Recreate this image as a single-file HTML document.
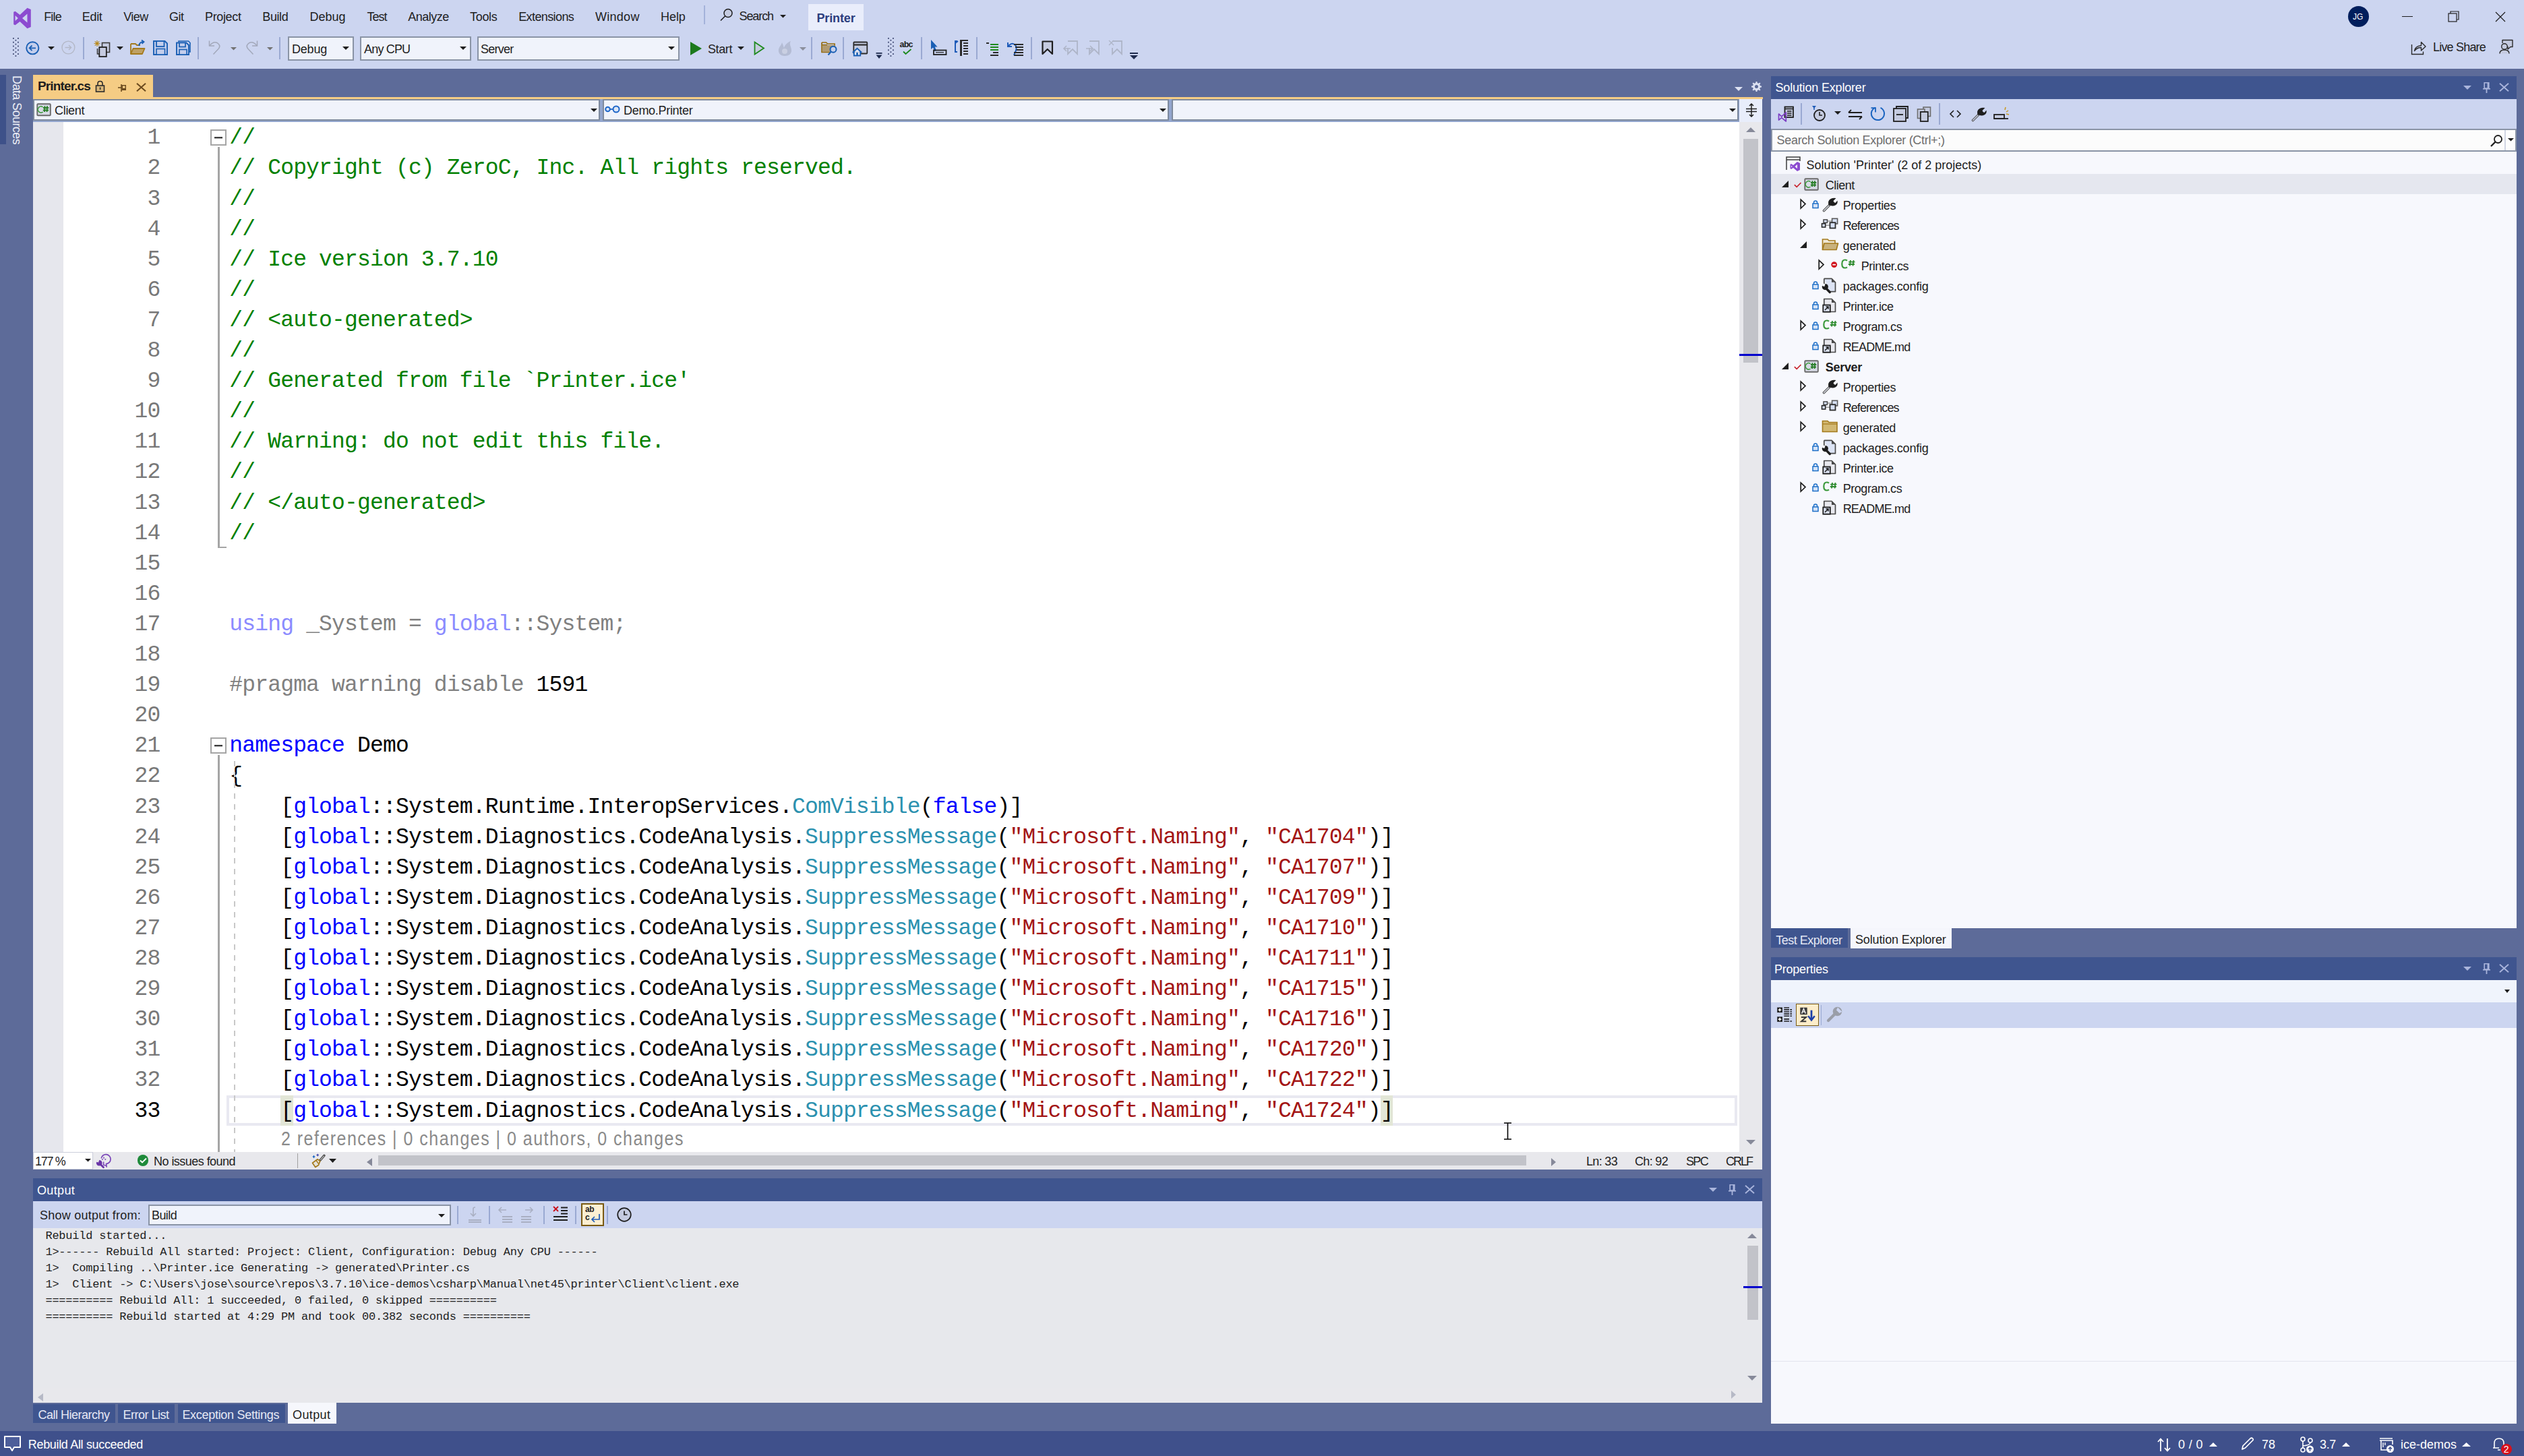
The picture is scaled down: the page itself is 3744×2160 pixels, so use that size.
<!DOCTYPE html>
<html><head><meta charset="utf-8"><title>Printer - Visual Studio</title>
<style>
html,body{margin:0;padding:0;}
body{width:3744px;height:2160px;position:relative;overflow:hidden;background:#CCD5F0;font-family:'Liberation Sans', sans-serif;}
.a{position:absolute;}
.t{position:absolute;white-space:pre;}
svg.a{overflow:visible;}
</style></head><body>
<div class="a" style="left:0px;top:0px;width:3744px;height:102px;background:#CCD5F0;"></div>
<svg class="a" style="left:17px;top:11px" width="32" height="32" viewBox="0 0 24 24"><path d="M17.6 0.5 L9.4 8.25 L4.2 4.3 L2.4 5.1 V18.9 L4.2 19.7 L9.4 15.75 L17.6 23.5 L21.6 21.8 V2.2 Z M4.2 15 V9 L7.4 12 Z M17.6 16.8 L12 12 L17.6 7.2 Z" fill="#8C4BD0" fill-rule="evenodd"/></svg>
<div class="t" style="left:65.20px;top:15.41px;font:18px 'Liberation Sans', sans-serif;line-height:20.11px;color:#1E1E1E;letter-spacing:-0.829px;">File</div>
<div class="t" style="left:121.80px;top:15.41px;font:18px 'Liberation Sans', sans-serif;line-height:20.11px;color:#1E1E1E;letter-spacing:-0.333px;">Edit</div>
<div class="t" style="left:183.20px;top:15.41px;font:18px 'Liberation Sans', sans-serif;line-height:20.11px;color:#1E1E1E;letter-spacing:-0.551px;">View</div>
<div class="t" style="left:251.00px;top:15.41px;font:18px 'Liberation Sans', sans-serif;line-height:20.11px;color:#1E1E1E;letter-spacing:-0.539px;">Git</div>
<div class="t" style="left:304.00px;top:15.41px;font:18px 'Liberation Sans', sans-serif;line-height:20.11px;color:#1E1E1E;letter-spacing:-0.347px;">Project</div>
<div class="t" style="left:389.30px;top:15.41px;font:18px 'Liberation Sans', sans-serif;line-height:20.11px;color:#1E1E1E;letter-spacing:-0.406px;">Build</div>
<div class="t" style="left:459.40px;top:15.41px;font:18px 'Liberation Sans', sans-serif;line-height:20.11px;color:#1E1E1E;letter-spacing:0.011px;">Debug</div>
<div class="t" style="left:544.60px;top:15.41px;font:18px 'Liberation Sans', sans-serif;line-height:20.11px;color:#1E1E1E;letter-spacing:-1.029px;">Test</div>
<div class="t" style="left:605.20px;top:15.41px;font:18px 'Liberation Sans', sans-serif;line-height:20.11px;color:#1E1E1E;letter-spacing:-0.492px;">Analyze</div>
<div class="t" style="left:697.00px;top:15.41px;font:18px 'Liberation Sans', sans-serif;line-height:20.11px;color:#1E1E1E;letter-spacing:-0.306px;">Tools</div>
<div class="t" style="left:769.20px;top:15.41px;font:18px 'Liberation Sans', sans-serif;line-height:20.11px;color:#1E1E1E;letter-spacing:-0.606px;">Extensions</div>
<div class="t" style="left:883.00px;top:15.41px;font:18px 'Liberation Sans', sans-serif;line-height:20.11px;color:#1E1E1E;letter-spacing:0.278px;">Window</div>
<div class="t" style="left:980.00px;top:15.41px;font:18px 'Liberation Sans', sans-serif;line-height:20.11px;color:#1E1E1E;letter-spacing:-0.058px;">Help</div>
<div class="a" style="left:1044px;top:8px;width:2px;height:28px;background:#A4B2DA;"></div>
<svg class="a" style="left:1067px;top:12px;" width="22" height="20" viewBox="0 0 22 20"><circle cx="13" cy="7.5" r="6" fill="#C5CBE0" stroke="#1E1E1E" stroke-width="1.5"/><path d="M9 11.5 L2 18.5" stroke="#1E1E1E" stroke-width="1.6"/></svg>
<div class="t" style="left:1096.50px;top:13.71px;font:18px 'Liberation Sans', sans-serif;line-height:20.11px;color:#1E1E1E;letter-spacing:-1.091px;">Search</div>
<svg class="a" style="left:1157px;top:21.5px;" width="9" height="5" viewBox="0 0 9 5"><path d="M0 0 H9 L4.5 4.5 Z" fill="#1E1E1E"/></svg>
<div class="a" style="left:1199px;top:6px;width:82px;height:39px;background:#E9EDFB;"></div>
<div class="t" style="left:1211.50px;top:16.71px;font:bold 18px 'Liberation Sans', sans-serif;line-height:20.11px;color:#2D3E7E;letter-spacing:-0.147px;">Printer</div>
<div class="a" style="left:3483px;top:9px;width:31px;height:31px;border-radius:50%;background:#001E5C"></div>
<div class="t" style="left:3490.00px;top:18.64px;font:12px 'Liberation Sans', sans-serif;line-height:13.41px;color:#FFFFFF;letter-spacing:0px;">JG</div>
<div class="a" style="left:3563px;top:23.5px;width:16px;height:1.2px;background:#1E1E1E;"></div>
<svg class="a" style="left:3631px;top:16px;" width="18" height="17" viewBox="0 0 18 17"><rect x="1" y="4" width="12" height="12" fill="none" stroke="#1E1E1E" stroke-width="1.2"/><path d="M4 4 V1 H16 V13 H13" fill="none" stroke="#1E1E1E" stroke-width="1.2"/></svg>
<svg class="a" style="left:3701px;top:17px;" width="16" height="16" viewBox="0 0 16 16"><path d="M1 1 L15 15 M15 1 L1 15" stroke="#1E1E1E" stroke-width="1.2"/></svg>
<svg class="a" style="left:19px;top:56px;" width="9" height="29" viewBox="0 0 9 29"><rect x="0" y="0.0" width="1.8" height="1.8" fill="#3C4670"/><rect x="7" y="0.0" width="1.8" height="1.8" fill="#3C4670"/><rect x="3.5" y="2.9" width="1.8" height="1.8" fill="#3C4670"/><rect x="0" y="5.8" width="1.8" height="1.8" fill="#3C4670"/><rect x="7" y="5.8" width="1.8" height="1.8" fill="#3C4670"/><rect x="3.5" y="8.7" width="1.8" height="1.8" fill="#3C4670"/><rect x="0" y="11.6" width="1.8" height="1.8" fill="#3C4670"/><rect x="7" y="11.6" width="1.8" height="1.8" fill="#3C4670"/><rect x="3.5" y="14.5" width="1.8" height="1.8" fill="#3C4670"/><rect x="0" y="17.4" width="1.8" height="1.8" fill="#3C4670"/><rect x="7" y="17.4" width="1.8" height="1.8" fill="#3C4670"/><rect x="3.5" y="20.3" width="1.8" height="1.8" fill="#3C4670"/><rect x="0" y="23.2" width="1.8" height="1.8" fill="#3C4670"/><rect x="7" y="23.2" width="1.8" height="1.8" fill="#3C4670"/><rect x="3.5" y="26.1" width="1.8" height="1.8" fill="#3C4670"/></svg>
<svg class="a" style="left:38px;top:61px;" width="21" height="21" viewBox="0 0 21 21"><circle cx="10.3" cy="10.3" r="9.1" fill="#C3CEEC" stroke="#1A5FB4" stroke-width="1.9"/><path d="M15 10.3 H6 M9.5 6.5 L5.7 10.3 L9.5 14.1" fill="none" stroke="#1A5FB4" stroke-width="1.8"/></svg>
<svg class="a" style="left:71px;top:69px;" width="10" height="6" viewBox="0 0 10 6"><path d="M0 0 H10 L5 5 Z" fill="#1E1E1E"/></svg>
<svg class="a" style="left:91px;top:60px;" width="21" height="21" viewBox="0 0 21 21"><circle cx="10.4" cy="10.5" r="9.4" fill="none" stroke="#B3B8C7" stroke-width="1.4"/><path d="M5.5 10.5 H14.5 M11 7 L14.6 10.5 L11 14" fill="none" stroke="#B3B8C7" stroke-width="1.4"/></svg>
<div class="a" style="left:123px;top:55px;width:2px;height:33px;background:#9AA9D2;"></div>
<svg class="a" style="left:141px;top:59px;" width="24" height="27" viewBox="0 0 24 27"><g fill="none" stroke="#B8891A" stroke-width="1.2"><path d="M3 1 V10 M-1.5 5.5 H7.5 M-0.2 2.3 L6.2 8.7 M6.2 2.3 L-0.2 8.7"/></g><rect x="10.5" y="4.5" width="11" height="14" fill="#C5CBE0" stroke="#3A3A3A" stroke-width="1.6"/><path d="M3.5 13 V21 H6" fill="none" stroke="#3A3A3A" stroke-width="1.6"/><rect x="6.3" y="11" width="10.5" height="14" fill="#C5CBE0" stroke="#1E1E1E" stroke-width="1.8"/></svg>
<svg class="a" style="left:173px;top:69px;" width="10" height="6" viewBox="0 0 10 6"><path d="M0 0 H10 L5 5 Z" fill="#1E1E1E"/></svg>
<svg class="a" style="left:193px;top:59px;" width="23" height="23" viewBox="0 0 23 23"><path d="M1 6 H8 L10 8 H15 M1 6 V21" fill="#C9B27E" stroke="#A47A1C" stroke-width="1.8"/><path d="M1 21 L4.5 13 H21.5 L18 21 Z" fill="#BFA163" stroke="#A47A1C" stroke-width="1.8" stroke-linejoin="round"/><path d="M13 9 Q14 3 20 3 M17 0.5 L20.5 3 L17.5 5.8" fill="none" stroke="#1A5FB4" stroke-width="1.8"/></svg>
<svg class="a" style="left:227px;top:60px;" width="22" height="22" viewBox="0 0 22 22"><path d="M1 1 H17.5 L21 4.5 V21 H1 Z" fill="#C3CEEC" stroke="#1A5FB4" stroke-width="1.9"/><rect x="5" y="1" width="11.5" height="8" fill="#C3CEEC" stroke="#1A5FB4" stroke-width="1.8"/><rect x="5" y="12.5" width="12.5" height="8.5" fill="#C3CEEC" stroke="#1A5FB4" stroke-width="1.6"/></svg>
<svg class="a" style="left:261px;top:60px;" width="22" height="22" viewBox="0 0 22 22"><path d="M4 2.5 V1 H18.5 L21 3.5 V17 H19" fill="none" stroke="#1A5FB4" stroke-width="1.6"/><path d="M1 3.5 H15.5 L19 7 V21 H1 Z" fill="#C3CEEC" stroke="#1A5FB4" stroke-width="1.9"/><rect x="5" y="3.5" width="9" height="6" fill="#C3CEEC" stroke="#1A5FB4" stroke-width="1.7"/><rect x="5" y="13.5" width="11" height="7.5" fill="#C3CEEC" stroke="#1A5FB4" stroke-width="1.6"/></svg>
<div class="a" style="left:293px;top:55px;width:2px;height:33px;background:#9AA9D2;"></div>
<svg class="a" style="left:309px;top:59px;" width="20" height="23" viewBox="0 0 20 23"><path d="M1.5 1.5 V9 H9" fill="none" stroke="#A2A8BA" stroke-width="1.5"/><path d="M1.8 8.8 Q5 5 8 4 Q12 3 15 6 Q18.5 9.5 15 13.5 L7.5 21.5" fill="none" stroke="#A2A8BA" stroke-width="1.5"/></svg>
<svg class="a" style="left:342px;top:70px;" width="9" height="5" viewBox="0 0 9 5"><path d="M0 0 H9 L4.5 4.5 Z" fill="#737373"/></svg>
<svg class="a" style="left:363px;top:59px;" width="20" height="23" viewBox="0 0 20 23"><path d="M18.5 1.5 V9 H11" fill="none" stroke="#A2A8BA" stroke-width="1.5"/><path d="M18.2 8.8 Q15 5 12 4 Q8 3 5 6 Q1.5 9.5 5 13.5 L12.5 21.5" fill="none" stroke="#A2A8BA" stroke-width="1.5"/></svg>
<svg class="a" style="left:396px;top:70px;" width="9" height="5" viewBox="0 0 9 5"><path d="M0 0 H9 L4.5 4.5 Z" fill="#737373"/></svg>
<div class="a" style="left:414px;top:55px;width:2px;height:33px;background:#9AA9D2;"></div>
<div class="a" style="left:427px;top:54px;width:98px;height:36px;background:#F0F3FB;box-sizing:border-box;border:2px solid #8A94A6;"></div>
<div class="t" style="left:433.00px;top:62.71px;font:18px 'Liberation Sans', sans-serif;line-height:20.11px;color:#1E1E1E;letter-spacing:-0.209px;">Debug</div>
<svg class="a" style="left:508px;top:69px;" width="10" height="6" viewBox="0 0 10 6"><path d="M0 0 H10 L5 5 Z" fill="#1E1E1E"/></svg>
<div class="a" style="left:534px;top:54px;width:165px;height:36px;background:#F0F3FB;box-sizing:border-box;border:2px solid #8A94A6;"></div>
<div class="t" style="left:540.00px;top:62.71px;font:18px 'Liberation Sans', sans-serif;line-height:20.11px;color:#1E1E1E;letter-spacing:-0.819px;">Any CPU</div>
<svg class="a" style="left:682px;top:69px;" width="10" height="6" viewBox="0 0 10 6"><path d="M0 0 H10 L5 5 Z" fill="#1E1E1E"/></svg>
<div class="a" style="left:708px;top:54px;width:300px;height:36px;background:#F0F3FB;box-sizing:border-box;border:2px solid #8A94A6;"></div>
<div class="t" style="left:713.00px;top:62.71px;font:18px 'Liberation Sans', sans-serif;line-height:20.11px;color:#1E1E1E;letter-spacing:-0.753px;">Server</div>
<svg class="a" style="left:991px;top:69px;" width="10" height="6" viewBox="0 0 10 6"><path d="M0 0 H10 L5 5 Z" fill="#1E1E1E"/></svg>
<svg class="a" style="left:1023px;top:61px;" width="19" height="22" viewBox="0 0 19 22"><path d="M1 1 L18 11 L1 21 Z" fill="#1C7A1C"/></svg>
<div class="t" style="left:1050.00px;top:62.71px;font:18px 'Liberation Sans', sans-serif;line-height:20.11px;color:#1E1E1E;letter-spacing:-0.4px;">Start</div>
<svg class="a" style="left:1094px;top:69px;" width="10" height="6" viewBox="0 0 10 6"><path d="M0 0 H10 L5 5 Z" fill="#1E1E1E"/></svg>
<svg class="a" style="left:1118px;top:61px;" width="17" height="21" viewBox="0 0 17 21"><path d="M1.5 1.5 L15 10.5 L1.5 19.5 Z" fill="#C5CBE0" stroke="#1C8A1C" stroke-width="1.8"/></svg>
<svg class="a" style="left:1153px;top:59px;" width="22" height="25" viewBox="0 0 22 25"><path d="M11 24 C4 24 1 19 2 14 C3 10 6 8 7 4 C9 8 9 10 10 12 C11 8 15 4 20 2 C17 7 21 10 21 16 C21 21 17 24 11 24 Z" fill="#B4BCD4"/><circle cx="11" cy="17" r="4" fill="#C9CFE2"/></svg>
<svg class="a" style="left:1186px;top:70px;" width="10" height="6" viewBox="0 0 10 6"><path d="M0 0 H10 L5 5 Z" fill="#8B8F9C"/></svg>
<div class="a" style="left:1203px;top:55px;width:2px;height:33px;background:#9AA9D2;"></div>
<svg class="a" style="left:1217px;top:60px;" width="26" height="25" viewBox="0 0 26 25"><path d="M2 3 H8.5 L10.5 5 H21 V10" fill="none" stroke="#946B0E" stroke-width="1.7"/><path d="M2 3 V17.5 H14" fill="none" stroke="#946B0E" stroke-width="1.7"/><path d="M2.8 6.8 H21 V11 L14 17 H2.8 Z" fill="#B09A72"/><path d="M2 6.5 H10" stroke="#946B0E" stroke-width="1.4"/><circle cx="19" cy="13.2" r="4.5" fill="#C5D0EC" stroke="#1A5FB4" stroke-width="2"/><path d="M15.8 16.5 L11.5 21.5" stroke="#1A5FB4" stroke-width="2.1"/></svg>
<div class="a" style="left:1250px;top:55px;width:2px;height:33px;background:#9AA9D2;"></div>
<svg class="a" style="left:1264px;top:61px;" width="26" height="24" viewBox="0 0 26 24"><rect x="2.3" y="1.5" width="20" height="17" rx="1" fill="#C5CBE0" stroke="#2B2B2B" stroke-width="1.8"/><path d="M2.3 5.5 H22.3" stroke="#2B2B2B" stroke-width="2.2"/><path d="M0.8 17 L7.5 10.8 L14.2 17 M2.8 15.5 V21.5 H12.2 V15.5" fill="#E6ECF8" stroke="#1A5FB4" stroke-width="1.9"/><rect x="6.2" y="17" width="2.6" height="4" fill="#1A5FB4"/></svg>
<svg class="a" style="left:1299px;top:77px;" width="10" height="11" viewBox="0 0 10 11"><rect x="0.5" y="1" width="9" height="1.8" fill="#1E2B4E"/><path d="M0.5 4.5 H9.5 L5 10 Z" fill="#1E2B4E"/></svg>
<svg class="a" style="left:1317px;top:56px;" width="9" height="29" viewBox="0 0 9 29"><rect x="0" y="0.0" width="1.8" height="1.8" fill="#3C4670"/><rect x="7" y="0.0" width="1.8" height="1.8" fill="#3C4670"/><rect x="3.5" y="2.9" width="1.8" height="1.8" fill="#3C4670"/><rect x="0" y="5.8" width="1.8" height="1.8" fill="#3C4670"/><rect x="7" y="5.8" width="1.8" height="1.8" fill="#3C4670"/><rect x="3.5" y="8.7" width="1.8" height="1.8" fill="#3C4670"/><rect x="0" y="11.6" width="1.8" height="1.8" fill="#3C4670"/><rect x="7" y="11.6" width="1.8" height="1.8" fill="#3C4670"/><rect x="3.5" y="14.5" width="1.8" height="1.8" fill="#3C4670"/><rect x="0" y="17.4" width="1.8" height="1.8" fill="#3C4670"/><rect x="7" y="17.4" width="1.8" height="1.8" fill="#3C4670"/><rect x="3.5" y="20.3" width="1.8" height="1.8" fill="#3C4670"/><rect x="0" y="23.2" width="1.8" height="1.8" fill="#3C4670"/><rect x="7" y="23.2" width="1.8" height="1.8" fill="#3C4670"/><rect x="3.5" y="26.1" width="1.8" height="1.8" fill="#3C4670"/></svg>
<div class="t" style="left:1334.50px;top:59.68px;font:bold 12.5px 'Liberation Sans', sans-serif;line-height:13.96px;color:#1E1E1E;letter-spacing:-0.782px;">abc</div>
<svg class="a" style="left:1339px;top:72px;" width="14" height="10" viewBox="0 0 14 10"><path d="M1 4.5 L4.5 8 L12.5 1" fill="none" stroke="#1C8A1C" stroke-width="1.8"/></svg>
<div class="a" style="left:1366px;top:55px;width:2px;height:33px;background:#9AA9D2;"></div>
<svg class="a" style="left:1380px;top:59px;" width="25" height="26" viewBox="0 0 25 26"><path d="M1 0 L1 14 L4 11.5 L6.5 17 L9 16 L6.8 10.5 L10.5 10.5 Z" fill="#1A5FB4"/><rect x="5" y="15.5" width="18.5" height="6.5" fill="none" stroke="#1E1E1E" stroke-width="1.8"/><path d="M8 18.7 H20" stroke="#1E1E1E" stroke-width="1.2"/></svg>
<svg class="a" style="left:1414px;top:59px;" width="24" height="26" viewBox="0 0 24 26"><path d="M6 2 H3 V18 H6" fill="none" stroke="#1E5BB8" stroke-width="2"/><path d="M3 5 L7 2" stroke="#1E5BB8" stroke-width="2"/><rect x="10" y="0" width="3" height="24" fill="#2B2B2B"/><path d="M13 1 H22 M15 5 H22 M15 9 H22 M15 13 H22 M15 17 H22 M15 21 H22" stroke="#2B2B2B" stroke-width="2"/></svg>
<div class="a" style="left:1448px;top:55px;width:2px;height:33px;background:#9AA9D2;"></div>
<svg class="a" style="left:1463px;top:62px;" width="21" height="21" viewBox="0 0 21 21"><path d="M0 2 H4 M6 4 H18 M6 8 H18 M6 12 H18 M10 16 H18 M6 20 H18" stroke="#2B2B2B" stroke-width="2"/><path d="M6 4 H18 M6 8 H18 M6 12 H18" stroke="#1C8A1C" stroke-width="2"/></svg>
<svg class="a" style="left:1494px;top:60px;" width="25" height="24" viewBox="0 0 25 24"><path d="M10 22 L13 15 Q15 9 11 6 Q7 3 3 7 L1 9 M1 3 V9 H7" fill="none" stroke="#1E5BB8" stroke-width="2"/><path d="M10 6 H24 M12 10 H24 M14 14 H24 M10 18 H24 M10 22 H24" stroke="#2B2B2B" stroke-width="2"/></svg>
<div class="a" style="left:1529px;top:55px;width:2px;height:33px;background:#9AA9D2;"></div>
<svg class="a" style="left:1545px;top:60px;" width="18" height="22" viewBox="0 0 18 22"><path d="M1.5 1.5 H16 V20 L8.75 13 L1.5 20 Z" fill="#C5CBE0" stroke="#1E1E1E" stroke-width="2.2" stroke-linejoin="round"/></svg>
<svg class="a" style="left:1578px;top:59px;" width="22" height="23" viewBox="0 0 22 23"><path d="M6 2 H20 V21 L13 14 L6 21 V12" fill="none" stroke="#AEB5C8" stroke-width="1.8"/></svg>
<svg class="a" style="left:1610px;top:59px;" width="22" height="23" viewBox="0 0 22 23"><path d="M6 2 H20 V21 L13 14 L6 21 V12" fill="none" stroke="#AEB5C8" stroke-width="1.8"/></svg>
<svg class="a" style="left:1644px;top:59px;" width="22" height="23" viewBox="0 0 22 23"><path d="M6 2 H20 V21 L13 14 L6 21 V12" fill="none" stroke="#AEB5C8" stroke-width="1.8"/></svg>
<svg class="a" style="left:1577px;top:67px;" width="12" height="10" viewBox="0 0 12 10"><path d="M11 5 H1 M5 1 L1 5 L5 9" fill="none" stroke="#AEB5C8" stroke-width="1.6"/></svg>
<svg class="a" style="left:1610px;top:67px;" width="12" height="10" viewBox="0 0 12 10"><path d="M1 5 H11 M7 1 L11 5 L7 9" fill="none" stroke="#AEB5C8" stroke-width="1.6"/></svg>
<svg class="a" style="left:1644px;top:59px;" width="9" height="9" viewBox="0 0 9 9"><path d="M1 1 L8 8 M8 1 L1 8" stroke="#AEB5C8" stroke-width="1.4"/></svg>
<svg class="a" style="left:1676px;top:78px;" width="12" height="11" viewBox="0 0 12 11"><rect x="0" y="0" width="12" height="2" fill="#1E2B4E"/><path d="M0 4 H12 L6 10 Z" fill="#1E2B4E"/></svg>
<svg class="a" style="left:3576px;top:60px;" width="24" height="22" viewBox="0 0 24 22"><path d="M1.5 6 V20.5 H18.5 V16.5" fill="none" stroke="#2B2B2B" stroke-width="1.4"/><path d="M5.5 15.5 Q6.5 8.5 15.5 7.5 V2.5 L22 9 L15.5 15 V10.5 Q9 10.5 5.5 15.5 Z" fill="none" stroke="#2B2B2B" stroke-width="1.4" stroke-linejoin="round"/></svg>
<div class="t" style="left:3609.00px;top:59.71px;font:18px 'Liberation Sans', sans-serif;line-height:20.11px;color:#1E1E1E;letter-spacing:-0.806px;">Live Share</div>
<svg class="a" style="left:3707px;top:58px;" width="22" height="23" viewBox="0 0 22 23"><path d="M5 6 V1.5 H20 V11.5 H17 L13 15 V11.5 H12" fill="#C5CBE0" stroke="#2B2B2B" stroke-width="1.4" stroke-linejoin="round"/><circle cx="8" cy="11" r="4.3" fill="#C5CBE0" stroke="#2B2B2B" stroke-width="1.4"/><path d="M1 21.5 Q1 16 8 16 Q15 16 15 21.5" fill="#C5CBE0" stroke="#2B2B2B" stroke-width="1.4"/></svg>
<div class="a" style="left:0px;top:102px;width:3744px;height:2021px;background:#5D6B99;"></div>
<div class="a" style="left:0px;top:111px;width:9px;height:103px;background:#3E5189;"></div>
<div class="t" style="left:35px;top:111.5px;font:18px 'Liberation Sans', sans-serif;color:#EDEFF7;transform-origin:0 0;transform:rotate(90deg);letter-spacing:-0.58px;line-height:20px">Data Sources</div>
<div class="a" style="left:49px;top:111px;width:178px;height:36px;background:#F5CC84;"></div>
<div class="a" style="left:49px;top:144px;width:2566px;height:3px;background:#F5CC84;"></div>
<div class="t" style="left:56.00px;top:117.30px;font:bold 19px 'Liberation Sans', sans-serif;line-height:21.23px;color:#1E1E1E;letter-spacing:-0.861px;">Printer.cs</div>
<svg class="a" style="left:141px;top:119px;" width="15" height="18" viewBox="0 0 15 18"><path d="M4 8 V5 Q4 1.5 7.5 1.5 Q11 1.5 11 5 V8" fill="none" stroke="#2B2B2B" stroke-width="1.6"/><rect x="1.5" y="8" width="12" height="9" fill="#D9B779" stroke="#2B2B2B" stroke-width="1.6"/><rect x="6.8" y="10.5" width="1.6" height="3.5" fill="#2B2B2B"/></svg>
<svg class="a" style="left:175px;top:124px;" width="13" height="13" viewBox="0 0 13 13"><path d="M0 6 H5" stroke="#6B4A1E" stroke-width="1.6"/><rect x="5.5" y="2" width="6.5" height="8" fill="#6B4A1E"/><rect x="7" y="3.5" width="3.6" height="3.3" fill="#F5CC84"/><path d="M5 1 V12" stroke="#6B4A1E" stroke-width="1.6"/></svg>
<svg class="a" style="left:202px;top:123px;" width="15" height="13" viewBox="0 0 15 13"><path d="M1 0.8 L14 12.2 M14 0.8 L1 12.2" stroke="#6B4A1E" stroke-width="2.1"/></svg>
<div class="a" style="left:49px;top:147px;width:2531px;height:34px;background:#93A6CE;"></div>
<div class="a" style="left:49px;top:147px;width:841px;height:32px;background:#F0F3FB;box-sizing:border-box;border:2px solid #7F8B9E;"></div>
<svg class="a" style="left:876px;top:161px;" width="10" height="5" viewBox="0 0 10 5"><path d="M0 0 H10 L5 5 Z" fill="#1E1E1E"/></svg>
<div class="a" style="left:894px;top:147px;width:840px;height:32px;background:#F0F3FB;box-sizing:border-box;border:2px solid #7F8B9E;"></div>
<svg class="a" style="left:1720px;top:161px;" width="10" height="5" viewBox="0 0 10 5"><path d="M0 0 H10 L5 5 Z" fill="#1E1E1E"/></svg>
<div class="a" style="left:1738px;top:147px;width:841px;height:32px;background:#F0F3FB;box-sizing:border-box;border:2px solid #7F8B9E;"></div>
<svg class="a" style="left:2565px;top:161px;" width="10" height="5" viewBox="0 0 10 5"><path d="M0 0 H10 L5 5 Z" fill="#1E1E1E"/></svg>
<svg class="a" style="left:54px;top:153px;" width="22" height="20" viewBox="0 0 22 20"><rect x="1.3" y="1.3" width="19.5" height="17" rx="1" fill="#D8DAE6" stroke="#6A6A6A" stroke-width="1.9"/><path d="M9.6 5.8 A4.6 4.6 0 1 0 9.6 13.2" fill="none" stroke="#3C9A3C" stroke-width="1.5"/><path d="M12.5 4.3 L12 13 M16 4.3 L15.5 13 M10 7 H18.3 M9.8 10.5 H18" stroke="#2A7F2A" stroke-width="1.9"/></svg>
<div class="t" style="left:81.00px;top:153.51px;font:18px 'Liberation Sans', sans-serif;line-height:20.11px;color:#1E1E1E;letter-spacing:-0.3px;">Client</div>
<svg class="a" style="left:897px;top:156px;" width="25" height="12" viewBox="0 0 25 12"><circle cx="4.5" cy="6" r="3.3" fill="#DCE6F6" stroke="#1E66C8" stroke-width="2"/><path d="M8 6 H12" stroke="#1E66C8" stroke-width="1.8"/><circle cx="17" cy="6" r="4.5" fill="#DCE6F6" stroke="#1E66C8" stroke-width="2"/></svg>
<div class="t" style="left:925.00px;top:153.51px;font:18px 'Liberation Sans', sans-serif;line-height:20.11px;color:#1E1E1E;letter-spacing:-0.3px;">Demo.Printer</div>
<div class="a" style="left:2580px;top:147px;width:34px;height:34px;background:#E8EDFB;"></div>
<svg class="a" style="left:2590px;top:153px;" width="16" height="21" viewBox="0 0 16 21"><path d="M8 1 V20 M5 4 L8 1 L11 4 M5 17 L8 20 L11 17" fill="none" stroke="#1E1E1E" stroke-width="1.5"/><path d="M0 8.5 H16 M0 12.5 H16" stroke="#1E1E1E" stroke-width="1.6"/></svg>
<svg class="a" style="left:2573px;top:129px;" width="12" height="7" viewBox="0 0 12 7"><path d="M0 0 H12 L6 6 Z" fill="#DDE2F2"/></svg>
<svg class="a" style="left:2598px;top:121px;" width="15" height="15" viewBox="0 0 15 15"><path d="M12.97 6.30 L15.04 6.52 L15.04 8.48 L12.97 8.70 L12.22 10.52 L13.52 12.13 L12.13 13.52 L10.52 12.22 L8.70 12.97 L8.48 15.04 L6.52 15.04 L6.30 12.97 L4.48 12.22 L2.87 13.52 L1.48 12.13 L2.78 10.52 L2.03 8.70 L-0.04 8.48 L-0.04 6.52 L2.03 6.30 L2.78 4.48 L1.48 2.87 L2.87 1.48 L4.48 2.78 L6.30 2.03 L6.52 -0.04 L8.48 -0.04 L8.70 2.03 L10.52 2.78 L12.13 1.48 L13.52 2.87 L12.22 4.48 Z M7.5 5 A2.5 2.5 0 1 0 7.5 10 A2.5 2.5 0 1 0 7.5 5 Z" fill="#DDE2F2" fill-rule="evenodd"/></svg>
<div class="a" style="left:49px;top:181px;width:2531px;height:1528px;background:#FFFFFF;"></div>
<div class="a" style="left:49px;top:181px;width:45px;height:1528px;background:#E6E7ED;"></div>
<div class="a" style="left:2580px;top:181px;width:34px;height:1528px;background:#E8E8EC;"></div>
<svg class="a" style="left:2590px;top:189px;" width="14" height="8" viewBox="0 0 14 8"><path d="M0 7 L7 0 L14 7 Z" fill="#868999"/></svg>
<div class="a" style="left:2586px;top:206px;width:22px;height:332px;background:#C2C3C9;"></div>
<div class="a" style="left:2580px;top:525px;width:34px;height:3px;background:#0000CD;"></div>
<svg class="a" style="left:2590px;top:1691px;" width="14" height="8" viewBox="0 0 14 8"><path d="M0 0 H14 L7 7 Z" fill="#868999"/></svg>
<div class="a" style="left:336px;top:1625px;width:2241px;height:45px;box-sizing:border-box;border:4.4px solid #E9E9F1;"></div>
<div class="a" style="left:416.3px;top:1625px;width:18.6px;height:45px;background:#E2E6D6;"></div>
<div class="a" style="left:2047.6px;top:1625px;width:18.6px;height:45px;background:#E2E6D6;"></div>
<div class="t" style="left:218.53px;top:186.33px;font:33px 'Liberation Mono', monospace;line-height:37.38px;color:#787878;letter-spacing:-0.8332226562500011px;">1</div>
<div class="t" style="left:340.30px;top:186.33px;font:33px 'Liberation Mono', monospace;line-height:37.38px;color:#000;letter-spacing:-0.8332226562500011px;"><span style="color:#008000">//</span></div>
<div class="t" style="left:218.53px;top:231.43px;font:33px 'Liberation Mono', monospace;line-height:37.38px;color:#787878;letter-spacing:-0.8332226562500011px;">2</div>
<div class="t" style="left:340.30px;top:231.43px;font:33px 'Liberation Mono', monospace;line-height:37.38px;color:#000;letter-spacing:-0.8332226562500011px;"><span style="color:#008000">// Copyright (c) ZeroC, Inc. All rights reserved.</span></div>
<div class="t" style="left:218.53px;top:276.53px;font:33px 'Liberation Mono', monospace;line-height:37.38px;color:#787878;letter-spacing:-0.8332226562500011px;">3</div>
<div class="t" style="left:340.30px;top:276.53px;font:33px 'Liberation Mono', monospace;line-height:37.38px;color:#000;letter-spacing:-0.8332226562500011px;"><span style="color:#008000">//</span></div>
<div class="t" style="left:218.53px;top:321.63px;font:33px 'Liberation Mono', monospace;line-height:37.38px;color:#787878;letter-spacing:-0.8332226562500011px;">4</div>
<div class="t" style="left:340.30px;top:321.63px;font:33px 'Liberation Mono', monospace;line-height:37.38px;color:#000;letter-spacing:-0.8332226562500011px;"><span style="color:#008000">//</span></div>
<div class="t" style="left:218.53px;top:366.73px;font:33px 'Liberation Mono', monospace;line-height:37.38px;color:#787878;letter-spacing:-0.8332226562500011px;">5</div>
<div class="t" style="left:340.30px;top:366.73px;font:33px 'Liberation Mono', monospace;line-height:37.38px;color:#000;letter-spacing:-0.8332226562500011px;"><span style="color:#008000">// Ice version 3.7.10</span></div>
<div class="t" style="left:218.53px;top:411.83px;font:33px 'Liberation Mono', monospace;line-height:37.38px;color:#787878;letter-spacing:-0.8332226562500011px;">6</div>
<div class="t" style="left:340.30px;top:411.83px;font:33px 'Liberation Mono', monospace;line-height:37.38px;color:#000;letter-spacing:-0.8332226562500011px;"><span style="color:#008000">//</span></div>
<div class="t" style="left:218.53px;top:456.93px;font:33px 'Liberation Mono', monospace;line-height:37.38px;color:#787878;letter-spacing:-0.8332226562500011px;">7</div>
<div class="t" style="left:340.30px;top:456.93px;font:33px 'Liberation Mono', monospace;line-height:37.38px;color:#000;letter-spacing:-0.8332226562500011px;"><span style="color:#008000">// &lt;auto-generated&gt;</span></div>
<div class="t" style="left:218.53px;top:502.03px;font:33px 'Liberation Mono', monospace;line-height:37.38px;color:#787878;letter-spacing:-0.8332226562500011px;">8</div>
<div class="t" style="left:340.30px;top:502.03px;font:33px 'Liberation Mono', monospace;line-height:37.38px;color:#000;letter-spacing:-0.8332226562500011px;"><span style="color:#008000">//</span></div>
<div class="t" style="left:218.53px;top:547.13px;font:33px 'Liberation Mono', monospace;line-height:37.38px;color:#787878;letter-spacing:-0.8332226562500011px;">9</div>
<div class="t" style="left:340.30px;top:547.13px;font:33px 'Liberation Mono', monospace;line-height:37.38px;color:#000;letter-spacing:-0.8332226562500011px;"><span style="color:#008000">// Generated from file `Printer.ice'</span></div>
<div class="t" style="left:199.56px;top:592.23px;font:33px 'Liberation Mono', monospace;line-height:37.38px;color:#787878;letter-spacing:-0.8332226562500011px;">10</div>
<div class="t" style="left:340.30px;top:592.23px;font:33px 'Liberation Mono', monospace;line-height:37.38px;color:#000;letter-spacing:-0.8332226562500011px;"><span style="color:#008000">//</span></div>
<div class="t" style="left:199.56px;top:637.33px;font:33px 'Liberation Mono', monospace;line-height:37.38px;color:#787878;letter-spacing:-0.8332226562500011px;">11</div>
<div class="t" style="left:340.30px;top:637.33px;font:33px 'Liberation Mono', monospace;line-height:37.38px;color:#000;letter-spacing:-0.8332226562500011px;"><span style="color:#008000">// Warning: do not edit this file.</span></div>
<div class="t" style="left:199.56px;top:682.43px;font:33px 'Liberation Mono', monospace;line-height:37.38px;color:#787878;letter-spacing:-0.8332226562500011px;">12</div>
<div class="t" style="left:340.30px;top:682.43px;font:33px 'Liberation Mono', monospace;line-height:37.38px;color:#000;letter-spacing:-0.8332226562500011px;"><span style="color:#008000">//</span></div>
<div class="t" style="left:199.56px;top:727.53px;font:33px 'Liberation Mono', monospace;line-height:37.38px;color:#787878;letter-spacing:-0.8332226562500011px;">13</div>
<div class="t" style="left:340.30px;top:727.53px;font:33px 'Liberation Mono', monospace;line-height:37.38px;color:#000;letter-spacing:-0.8332226562500011px;"><span style="color:#008000">// &lt;/auto-generated&gt;</span></div>
<div class="t" style="left:199.56px;top:772.63px;font:33px 'Liberation Mono', monospace;line-height:37.38px;color:#787878;letter-spacing:-0.8332226562500011px;">14</div>
<div class="t" style="left:340.30px;top:772.63px;font:33px 'Liberation Mono', monospace;line-height:37.38px;color:#000;letter-spacing:-0.8332226562500011px;"><span style="color:#008000">//</span></div>
<div class="t" style="left:199.56px;top:817.73px;font:33px 'Liberation Mono', monospace;line-height:37.38px;color:#787878;letter-spacing:-0.8332226562500011px;">15</div>
<div class="t" style="left:199.56px;top:862.83px;font:33px 'Liberation Mono', monospace;line-height:37.38px;color:#787878;letter-spacing:-0.8332226562500011px;">16</div>
<div class="t" style="left:199.56px;top:907.93px;font:33px 'Liberation Mono', monospace;line-height:37.38px;color:#787878;letter-spacing:-0.8332226562500011px;">17</div>
<div class="t" style="left:340.30px;top:907.93px;font:33px 'Liberation Mono', monospace;line-height:37.38px;color:#000;letter-spacing:-0.8332226562500011px;"><span style="color:#8B8BFF">using</span><span style="color:#808080"> _System = </span><span style="color:#8B8BFF">global</span><span style="color:#808080">::System;</span></div>
<div class="t" style="left:199.56px;top:953.03px;font:33px 'Liberation Mono', monospace;line-height:37.38px;color:#787878;letter-spacing:-0.8332226562500011px;">18</div>
<div class="t" style="left:199.56px;top:998.13px;font:33px 'Liberation Mono', monospace;line-height:37.38px;color:#787878;letter-spacing:-0.8332226562500011px;">19</div>
<div class="t" style="left:340.30px;top:998.13px;font:33px 'Liberation Mono', monospace;line-height:37.38px;color:#000;letter-spacing:-0.8332226562500011px;"><span style="color:#808080">#pragma warning disable</span><span style="color:#000000"> 1591</span></div>
<div class="t" style="left:199.56px;top:1043.23px;font:33px 'Liberation Mono', monospace;line-height:37.38px;color:#787878;letter-spacing:-0.8332226562500011px;">20</div>
<div class="t" style="left:199.56px;top:1088.33px;font:33px 'Liberation Mono', monospace;line-height:37.38px;color:#787878;letter-spacing:-0.8332226562500011px;">21</div>
<div class="t" style="left:340.30px;top:1088.33px;font:33px 'Liberation Mono', monospace;line-height:37.38px;color:#000;letter-spacing:-0.8332226562500011px;"><span style="color:#0000FF">namespace</span><span style="color:#000000"> Demo</span></div>
<div class="t" style="left:199.56px;top:1133.43px;font:33px 'Liberation Mono', monospace;line-height:37.38px;color:#787878;letter-spacing:-0.8332226562500011px;">22</div>
<div class="t" style="left:340.30px;top:1133.43px;font:33px 'Liberation Mono', monospace;line-height:37.38px;color:#000;letter-spacing:-0.8332226562500011px;"><span style="color:#000000">{</span></div>
<div class="t" style="left:199.56px;top:1178.53px;font:33px 'Liberation Mono', monospace;line-height:37.38px;color:#787878;letter-spacing:-0.8332226562500011px;">23</div>
<div class="t" style="left:340.30px;top:1178.53px;font:33px 'Liberation Mono', monospace;line-height:37.38px;color:#000;letter-spacing:-0.8332226562500011px;"><span style="color:#000000">    [</span><span style="color:#0000FF">global</span><span style="color:#000000">::System.Runtime.InteropServices.</span><span style="color:#2B91AF">ComVisible</span><span style="color:#000000">(</span><span style="color:#0000FF">false</span><span style="color:#000000">)]</span></div>
<div class="t" style="left:199.56px;top:1223.63px;font:33px 'Liberation Mono', monospace;line-height:37.38px;color:#787878;letter-spacing:-0.8332226562500011px;">24</div>
<div class="t" style="left:340.30px;top:1223.63px;font:33px 'Liberation Mono', monospace;line-height:37.38px;color:#000;letter-spacing:-0.8332226562500011px;"><span style="color:#000000">    [</span><span style="color:#0000FF">global</span><span style="color:#000000">::System.Diagnostics.CodeAnalysis.</span><span style="color:#2B91AF">SuppressMessage</span><span style="color:#000000">(</span><span style="color:#A31515">"Microsoft.Naming"</span><span style="color:#000000">, </span><span style="color:#A31515">"CA1704"</span><span style="color:#000000">)]</span></div>
<div class="t" style="left:199.56px;top:1268.73px;font:33px 'Liberation Mono', monospace;line-height:37.38px;color:#787878;letter-spacing:-0.8332226562500011px;">25</div>
<div class="t" style="left:340.30px;top:1268.73px;font:33px 'Liberation Mono', monospace;line-height:37.38px;color:#000;letter-spacing:-0.8332226562500011px;"><span style="color:#000000">    [</span><span style="color:#0000FF">global</span><span style="color:#000000">::System.Diagnostics.CodeAnalysis.</span><span style="color:#2B91AF">SuppressMessage</span><span style="color:#000000">(</span><span style="color:#A31515">"Microsoft.Naming"</span><span style="color:#000000">, </span><span style="color:#A31515">"CA1707"</span><span style="color:#000000">)]</span></div>
<div class="t" style="left:199.56px;top:1313.83px;font:33px 'Liberation Mono', monospace;line-height:37.38px;color:#787878;letter-spacing:-0.8332226562500011px;">26</div>
<div class="t" style="left:340.30px;top:1313.83px;font:33px 'Liberation Mono', monospace;line-height:37.38px;color:#000;letter-spacing:-0.8332226562500011px;"><span style="color:#000000">    [</span><span style="color:#0000FF">global</span><span style="color:#000000">::System.Diagnostics.CodeAnalysis.</span><span style="color:#2B91AF">SuppressMessage</span><span style="color:#000000">(</span><span style="color:#A31515">"Microsoft.Naming"</span><span style="color:#000000">, </span><span style="color:#A31515">"CA1709"</span><span style="color:#000000">)]</span></div>
<div class="t" style="left:199.56px;top:1358.93px;font:33px 'Liberation Mono', monospace;line-height:37.38px;color:#787878;letter-spacing:-0.8332226562500011px;">27</div>
<div class="t" style="left:340.30px;top:1358.93px;font:33px 'Liberation Mono', monospace;line-height:37.38px;color:#000;letter-spacing:-0.8332226562500011px;"><span style="color:#000000">    [</span><span style="color:#0000FF">global</span><span style="color:#000000">::System.Diagnostics.CodeAnalysis.</span><span style="color:#2B91AF">SuppressMessage</span><span style="color:#000000">(</span><span style="color:#A31515">"Microsoft.Naming"</span><span style="color:#000000">, </span><span style="color:#A31515">"CA1710"</span><span style="color:#000000">)]</span></div>
<div class="t" style="left:199.56px;top:1404.03px;font:33px 'Liberation Mono', monospace;line-height:37.38px;color:#787878;letter-spacing:-0.8332226562500011px;">28</div>
<div class="t" style="left:340.30px;top:1404.03px;font:33px 'Liberation Mono', monospace;line-height:37.38px;color:#000;letter-spacing:-0.8332226562500011px;"><span style="color:#000000">    [</span><span style="color:#0000FF">global</span><span style="color:#000000">::System.Diagnostics.CodeAnalysis.</span><span style="color:#2B91AF">SuppressMessage</span><span style="color:#000000">(</span><span style="color:#A31515">"Microsoft.Naming"</span><span style="color:#000000">, </span><span style="color:#A31515">"CA1711"</span><span style="color:#000000">)]</span></div>
<div class="t" style="left:199.56px;top:1449.13px;font:33px 'Liberation Mono', monospace;line-height:37.38px;color:#787878;letter-spacing:-0.8332226562500011px;">29</div>
<div class="t" style="left:340.30px;top:1449.13px;font:33px 'Liberation Mono', monospace;line-height:37.38px;color:#000;letter-spacing:-0.8332226562500011px;"><span style="color:#000000">    [</span><span style="color:#0000FF">global</span><span style="color:#000000">::System.Diagnostics.CodeAnalysis.</span><span style="color:#2B91AF">SuppressMessage</span><span style="color:#000000">(</span><span style="color:#A31515">"Microsoft.Naming"</span><span style="color:#000000">, </span><span style="color:#A31515">"CA1715"</span><span style="color:#000000">)]</span></div>
<div class="t" style="left:199.56px;top:1494.23px;font:33px 'Liberation Mono', monospace;line-height:37.38px;color:#787878;letter-spacing:-0.8332226562500011px;">30</div>
<div class="t" style="left:340.30px;top:1494.23px;font:33px 'Liberation Mono', monospace;line-height:37.38px;color:#000;letter-spacing:-0.8332226562500011px;"><span style="color:#000000">    [</span><span style="color:#0000FF">global</span><span style="color:#000000">::System.Diagnostics.CodeAnalysis.</span><span style="color:#2B91AF">SuppressMessage</span><span style="color:#000000">(</span><span style="color:#A31515">"Microsoft.Naming"</span><span style="color:#000000">, </span><span style="color:#A31515">"CA1716"</span><span style="color:#000000">)]</span></div>
<div class="t" style="left:199.56px;top:1539.33px;font:33px 'Liberation Mono', monospace;line-height:37.38px;color:#787878;letter-spacing:-0.8332226562500011px;">31</div>
<div class="t" style="left:340.30px;top:1539.33px;font:33px 'Liberation Mono', monospace;line-height:37.38px;color:#000;letter-spacing:-0.8332226562500011px;"><span style="color:#000000">    [</span><span style="color:#0000FF">global</span><span style="color:#000000">::System.Diagnostics.CodeAnalysis.</span><span style="color:#2B91AF">SuppressMessage</span><span style="color:#000000">(</span><span style="color:#A31515">"Microsoft.Naming"</span><span style="color:#000000">, </span><span style="color:#A31515">"CA1720"</span><span style="color:#000000">)]</span></div>
<div class="t" style="left:199.56px;top:1584.43px;font:33px 'Liberation Mono', monospace;line-height:37.38px;color:#787878;letter-spacing:-0.8332226562500011px;">32</div>
<div class="t" style="left:340.30px;top:1584.43px;font:33px 'Liberation Mono', monospace;line-height:37.38px;color:#000;letter-spacing:-0.8332226562500011px;"><span style="color:#000000">    [</span><span style="color:#0000FF">global</span><span style="color:#000000">::System.Diagnostics.CodeAnalysis.</span><span style="color:#2B91AF">SuppressMessage</span><span style="color:#000000">(</span><span style="color:#A31515">"Microsoft.Naming"</span><span style="color:#000000">, </span><span style="color:#A31515">"CA1722"</span><span style="color:#000000">)]</span></div>
<div class="t" style="left:199.56px;top:1629.53px;font:33px 'Liberation Mono', monospace;line-height:37.38px;color:#000000;letter-spacing:-0.8332226562500011px;">33</div>
<div class="t" style="left:340.30px;top:1629.53px;font:33px 'Liberation Mono', monospace;line-height:37.38px;color:#000;letter-spacing:-0.8332226562500011px;"><span style="color:#000000">    [</span><span style="color:#0000FF">global</span><span style="color:#000000">::System.Diagnostics.CodeAnalysis.</span><span style="color:#2B91AF">SuppressMessage</span><span style="color:#000000">(</span><span style="color:#A31515">"Microsoft.Naming"</span><span style="color:#000000">, </span><span style="color:#A31515">"CA1724"</span><span style="color:#000000">)]</span></div>
<svg class="a" style="left:312px;top:192px;" width="24" height="24" viewBox="0 0 24 24"><rect x="1" y="1" width="22" height="22" fill="#FFFFFF" stroke="#A5A5A5" stroke-width="2"/><rect x="6" y="11" width="12" height="2.4" fill="#3C3C3C"/></svg>
<div class="a" style="left:323.3px;top:218px;width:2.5px;height:595px;background:#A5A5A5;"></div>
<div class="a" style="left:323.3px;top:811px;width:12.5px;height:2px;background:#A5A5A5;"></div>
<svg class="a" style="left:312px;top:1094.0px;" width="24" height="24" viewBox="0 0 24 24"><rect x="1" y="1" width="22" height="22" fill="#FFFFFF" stroke="#A5A5A5" stroke-width="2"/><rect x="6" y="11" width="12" height="2.4" fill="#3C3C3C"/></svg>
<div class="a" style="left:323.3px;top:1120px;width:2.5px;height:589px;background:#A5A5A5;"></div>
<div class="a" style="left:347px;top:1129px;width:2px;height:580px;background:repeating-linear-gradient(#C8C8C8 0 7.5px, transparent 7.5px 16px)"></div>
<div class="t" style="left:417.00px;top:1676.67px;font:25px 'Liberation Sans', sans-serif;line-height:27.93px;color:#8A8A8A;letter-spacing:1.476px;transform:scaleY(1.17);transform-origin:0 22.6px;">2 references | 0 changes | 0 authors, 0 changes</div>
<svg class="a" style="left:2230px;top:1665px;" width="13" height="26" viewBox="0 0 13 26"><path d="M1 1 H12 M1 25 H12 M6.5 1 V25" stroke="#000" stroke-width="1.6"/></svg>
<div class="a" style="left:49px;top:1709px;width:2565px;height:26px;background:#E8E8EC;"></div>
<div class="a" style="left:49px;top:1709px;width:89px;height:26px;background:#FFFFFF;box-sizing:border-box;border:1px solid #CCCEDB;"></div>
<div class="t" style="left:52.00px;top:1712.71px;font:18px 'Liberation Sans', sans-serif;line-height:20.11px;color:#1E1E1E;letter-spacing:-1.309px;">177 %</div>
<svg class="a" style="left:126px;top:1719px;" width="9" height="5" viewBox="0 0 9 5"><path d="M0 0 H9 L4.5 4.5 Z" fill="#1E1E1E"/></svg>
<div class="a" style="left:140px;top:1709.5px;width:26px;height:24.5px;background:#EAEAEE;"></div>
<svg class="a" style="left:140px;top:1709px;" width="26" height="25" viewBox="0 0 26 25"><path d="M10.2 9.3 A7 7 0 1 1 17.6 17.6 L18.2 22.6" fill="none" stroke="#7A45B8" stroke-width="1.7"/><path d="M13.6 14.4 V19.2 L17.4 20.2" fill="none" stroke="#7A45B8" stroke-width="1.6"/><path d="M11.2 10.3 L12.6 11.6 M14 7.6 V9.8 M17 10.3 L15.6 11.6" stroke="#7A45B8" stroke-width="1.5"/><path d="M8.5 17.8 L13.5 22.8" stroke="#6A35A8" stroke-width="2.8" stroke-linecap="round"/><circle cx="7.2" cy="16.3" r="4.3" fill="#6A35A8"/><path d="M2.2 14.5 L6 15.5 L7.5 11.6 L4.4 10.8 Z" fill="#E8E8EC"/></svg>
<div class="a" style="left:203.5px;top:1713.3px;width:16.5px;height:16.5px;border-radius:50%;background:#1E8A3A"></div>
<svg class="a" style="left:206.5px;top:1717px;" width="11" height="9" viewBox="0 0 11 9"><path d="M1 4.5 L4 7.5 L10 1.5" fill="none" stroke="#fff" stroke-width="1.9"/></svg>
<div class="t" style="left:228.00px;top:1712.71px;font:18px 'Liberation Sans', sans-serif;line-height:20.11px;color:#1E1E1E;letter-spacing:-0.539px;">No issues found</div>
<div class="a" style="left:441px;top:1711px;width:1px;height:22px;background:#A0A0A0;"></div>
<svg class="a" style="left:460px;top:1709px;" width="24" height="24" viewBox="0 0 24 24"><path d="M5.5 4.6 Q5.9 6.7 8 7.1 Q5.9 7.5 5.5 9.6 Q5.1 7.5 3 7.1 Q5.1 6.7 5.5 4.6 Z" fill="#0A5EC0"/><path d="M11.2 2.3 Q11.6 4.2 13.5 4.6 Q11.6 5 11.2 6.9 Q10.8 5 8.9 4.6 Q10.8 4.2 11.2 2.3 Z" fill="#3A3FA8"/><path d="M15 12.2 L21 5.2" stroke="#4A4A4A" stroke-width="3.4" stroke-linecap="round"/><path d="M15.3 11.8 L20.7 5.6" stroke="#C8C8C8" stroke-width="1.1"/><path d="M3.5 16.2 L11 10.8 L14.8 13.4 L12.5 19.5 L7.8 22.5 Z" fill="#E6E2D8" stroke="#A47A1C" stroke-width="1.7" stroke-linejoin="round"/><path d="M9 12.5 L12.6 17.5" stroke="#A47A1C" stroke-width="1.3"/></svg>
<svg class="a" style="left:488px;top:1719px;" width="11" height="6" viewBox="0 0 11 6"><path d="M0 0 H11 L5.5 6 Z" fill="#1E1E1E"/></svg>
<svg class="a" style="left:544px;top:1718px;" width="8" height="12" viewBox="0 0 8 12"><path d="M8 0 V12 L0 6 Z" fill="#868999"/></svg>
<div class="a" style="left:561px;top:1714px;width:1703px;height:15px;background:#C2C3C9;"></div>
<svg class="a" style="left:2301px;top:1718px;" width="7" height="12" viewBox="0 0 7 12"><path d="M0 0 V12 L7 6 Z" fill="#868999"/></svg>
<div class="t" style="left:2353.00px;top:1712.71px;font:18px 'Liberation Sans', sans-serif;line-height:20.11px;color:#1E1E1E;letter-spacing:-0.674px;">Ln: 33</div>
<div class="t" style="left:2425.00px;top:1712.71px;font:18px 'Liberation Sans', sans-serif;line-height:20.11px;color:#1E1E1E;letter-spacing:-0.674px;">Ch: 92</div>
<div class="t" style="left:2501.00px;top:1712.71px;font:18px 'Liberation Sans', sans-serif;line-height:20.11px;color:#1E1E1E;letter-spacing:-1.672px;">SPC</div>
<div class="t" style="left:2560.00px;top:1712.71px;font:18px 'Liberation Sans', sans-serif;line-height:20.11px;color:#1E1E1E;letter-spacing:-2.004px;">CRLF</div>
<div class="a" style="left:49px;top:1748px;width:2565px;height:34px;background:#3F558F;"></div>
<div class="t" style="left:55.00px;top:1755.71px;font:18px 'Liberation Sans', sans-serif;line-height:20.11px;color:#FFFFFF;letter-spacing:0.359px;">Output</div>
<svg class="a" style="left:2535px;top:1762px;" width="12" height="6" viewBox="0 0 12 6"><path d="M0 0 H12 L6 6 Z" fill="#AAB5DC"/></svg>
<svg class="a" style="left:2564px;top:1757px;" width="11" height="16" viewBox="0 0 11 16"><path d="M2.2 0.8 H8.8 V9 H2.2 Z" fill="none" stroke="#AAB5DC" stroke-width="1.6"/><rect x="6.6" y="1" width="2.2" height="8" fill="#AAB5DC"/><path d="M0 9.8 H11" stroke="#AAB5DC" stroke-width="1.6"/><path d="M5.5 10 V16" stroke="#AAB5DC" stroke-width="1.8"/></svg>
<svg class="a" style="left:2588px;top:1758px;" width="15" height="13" viewBox="0 0 15 13"><path d="M1 0.8 L14 12.2 M14 0.8 L1 12.2" stroke="#AAB5DC" stroke-width="1.9"/></svg>
<div class="a" style="left:49px;top:1782px;width:2565px;height:40px;background:#CCD5F0;"></div>
<div class="t" style="left:59.00px;top:1792.51px;font:18px 'Liberation Sans', sans-serif;line-height:20.11px;color:#1E1E1E;letter-spacing:0.231px;">Show output from:</div>
<div class="a" style="left:220px;top:1787px;width:449px;height:31px;background:#F0F3FB;box-sizing:border-box;border:2px solid #8A94A6;"></div>
<div class="t" style="left:225.00px;top:1792.71px;font:18px 'Liberation Sans', sans-serif;line-height:20.11px;color:#1E1E1E;letter-spacing:-0.586px;">Build</div>
<svg class="a" style="left:650px;top:1801px;" width="10" height="6" viewBox="0 0 10 6"><path d="M0 0 H10 L5 5 Z" fill="#1E1E1E"/></svg>
<div class="a" style="left:678px;top:1789px;width:2px;height:27px;background:#9AA9D2;"></div>
<div class="a" style="left:725px;top:1789px;width:2px;height:27px;background:#9AA9D2;"></div>
<div class="a" style="left:806px;top:1789px;width:2px;height:27px;background:#9AA9D2;"></div>
<div class="a" style="left:853px;top:1789px;width:2px;height:27px;background:#9AA9D2;"></div>
<div class="a" style="left:900px;top:1789px;width:2px;height:27px;background:#9AA9D2;"></div>
<svg class="a" style="left:692px;top:1790px;" width="23" height="24" viewBox="0 0 23 24"><path d="M3 20 H22 M3 23 H22" stroke="#A9AFC2" stroke-width="2"/><path d="M10 14 V3 Q10 1 13 1 M6 10 L10 14 L14 10" fill="none" stroke="#A9AFC2" stroke-width="1.6"/></svg>
<svg class="a" style="left:739px;top:1790px;" width="22" height="24" viewBox="0 0 22 24"><path d="M1 5 H12 M5 1 L1 5 L5 9" fill="none" stroke="#A9AFC2" stroke-width="1.6"/><path d="M6 15 H21 M6 19 H21 M6 23 H21" stroke="#A9AFC2" stroke-width="2"/></svg>
<svg class="a" style="left:772px;top:1790px;" width="22" height="24" viewBox="0 0 22 24"><path d="M7 5 H18 M14 1 L18 5 L14 9" fill="none" stroke="#A9AFC2" stroke-width="1.6"/><path d="M1 15 H16 M1 19 H16 M1 23 H16" stroke="#A9AFC2" stroke-width="2"/></svg>
<svg class="a" style="left:820px;top:1789px;" width="24" height="25" viewBox="0 0 24 25"><path d="M1 1 L8 8 M8 1 L1 8" stroke="#C8101A" stroke-width="1.8"/><path d="M12 2.5 H22 M12 7 H22 M12 11.5 H22 M1 16 H22 M1 21 H22" stroke="#1E1E1E" stroke-width="1.8"/></svg>
<div class="a" style="left:862px;top:1785px;width:34px;height:34px;background:#FCEFD2;box-sizing:border-box;border:2.4px solid #7A5A12;"></div>
<div class="t" style="left:868.00px;top:1788.14px;font:bold 12px 'Liberation Sans', sans-serif;line-height:13.41px;color:#1E1E1E;letter-spacing:-0.3px;">ab</div>
<div class="t" style="left:868.00px;top:1800.14px;font:bold 12px 'Liberation Sans', sans-serif;line-height:13.41px;color:#1E1E1E;letter-spacing:-0.3px;">c</div>
<svg class="a" style="left:876px;top:1800px;" width="16" height="14" viewBox="0 0 16 14"><path d="M13 1 V9 H3 M6 5 L2 9 L6 13" fill="none" stroke="#1E5BB8" stroke-width="1.7"/></svg>
<svg class="a" style="left:914px;top:1790px;" width="24" height="24" viewBox="0 0 24 24"><circle cx="12" cy="12" r="9.8" fill="#C5CBE0" stroke="#1E1E1E" stroke-width="1.7"/><path d="M12 6.5 V12 H16.5" fill="none" stroke="#1E1E1E" stroke-width="1.7"/></svg>
<div class="a" style="left:49px;top:1822px;width:2565px;height:259px;background:#E7E8EC;"></div>
<div class="t" style="left:67.40px;top:1824.35px;font:17px 'Liberation Mono', monospace;line-height:19.26px;color:#1E1E1E;letter-spacing:-0.2116601562499998px;">Rebuild started...</div>
<div class="t" style="left:67.40px;top:1848.35px;font:17px 'Liberation Mono', monospace;line-height:19.26px;color:#1E1E1E;letter-spacing:-0.2116601562499998px;">1&gt;------ Rebuild All started: Project: Client, Configuration: Debug Any CPU ------</div>
<div class="t" style="left:67.40px;top:1872.35px;font:17px 'Liberation Mono', monospace;line-height:19.26px;color:#1E1E1E;letter-spacing:-0.2116601562499998px;">1&gt;  Compiling ..\Printer.ice Generating -&gt; generated\Printer.cs</div>
<div class="t" style="left:67.40px;top:1896.35px;font:17px 'Liberation Mono', monospace;line-height:19.26px;color:#1E1E1E;letter-spacing:-0.2116601562499998px;">1&gt;  Client -&gt; C:\Users\jose\source\repos\3.7.10\ice-demos\csharp\Manual\net45\printer\Client\client.exe</div>
<div class="t" style="left:67.40px;top:1920.35px;font:17px 'Liberation Mono', monospace;line-height:19.26px;color:#1E1E1E;letter-spacing:-0.2116601562499998px;">========== Rebuild All: 1 succeeded, 0 failed, 0 skipped ==========</div>
<div class="t" style="left:67.40px;top:1944.35px;font:17px 'Liberation Mono', monospace;line-height:19.26px;color:#1E1E1E;letter-spacing:-0.2116601562499998px;">========== Rebuild started at 4:29 PM and took 00.382 seconds ==========</div>
<svg class="a" style="left:2592px;top:1830px;" width="14" height="8" viewBox="0 0 14 8"><path d="M0 7 L7 0 L14 7 Z" fill="#868999"/></svg>
<div class="a" style="left:2592px;top:1848px;width:16px;height:110px;background:#C2C3C9;"></div>
<div class="a" style="left:2586px;top:1908px;width:28px;height:3px;background:#0000CD;"></div>
<svg class="a" style="left:2592px;top:2041px;" width="14" height="8" viewBox="0 0 14 8"><path d="M0 0 H14 L7 7 Z" fill="#868999"/></svg>
<div class="a" style="left:49px;top:2059px;width:2565px;height:22px;background:#E8E8EC;"></div>
<svg class="a" style="left:56px;top:2067px;" width="8" height="12" viewBox="0 0 8 12"><path d="M8 0 V12 L0 6 Z" fill="#B6B9C6"/></svg>
<svg class="a" style="left:2568px;top:2063px;" width="7" height="12" viewBox="0 0 7 12"><path d="M0 0 V12 L7 6 Z" fill="#B6B9C6"/></svg>
<div class="a" style="left:49px;top:2083px;width:122px;height:28px;background:#3F558F;"></div>
<div class="t" style="left:56.40px;top:2088.91px;font:18px 'Liberation Sans', sans-serif;line-height:20.11px;color:#E6E9F5;letter-spacing:-0.488px;">Call Hierarchy</div>
<div class="a" style="left:175px;top:2083px;width:84px;height:28px;background:#3F558F;"></div>
<div class="t" style="left:182.40px;top:2088.91px;font:18px 'Liberation Sans', sans-serif;line-height:20.11px;color:#E6E9F5;letter-spacing:-0.482px;">Error List</div>
<div class="a" style="left:263.5px;top:2083px;width:159px;height:28px;background:#3F558F;"></div>
<div class="t" style="left:270.40px;top:2088.91px;font:18px 'Liberation Sans', sans-serif;line-height:20.11px;color:#E6E9F5;letter-spacing:-0.294px;">Exception Settings</div>
<div class="a" style="left:427px;top:2081px;width:72px;height:31px;background:#F6F7FC;"></div>
<div class="t" style="left:434.00px;top:2088.71px;font:18px 'Liberation Sans', sans-serif;line-height:20.11px;color:#1E1E1E;letter-spacing:0.376px;">Output</div>
<div class="a" style="left:2627px;top:113px;width:1106px;height:34px;background:#3F558F;"></div>
<div class="t" style="left:2633.50px;top:120.41px;font:18px 'Liberation Sans', sans-serif;line-height:20.11px;color:#FFFFFF;letter-spacing:-0.181px;">Solution Explorer</div>
<svg class="a" style="left:3654px;top:127px;" width="12" height="6" viewBox="0 0 12 6"><path d="M0 0 H12 L6 6 Z" fill="#AAB5DC"/></svg>
<svg class="a" style="left:3683px;top:122px;" width="11" height="16" viewBox="0 0 11 16"><path d="M2.2 0.8 H8.8 V9 H2.2 Z" fill="none" stroke="#AAB5DC" stroke-width="1.6"/><rect x="6.6" y="1" width="2.2" height="8" fill="#AAB5DC"/><path d="M0 9.8 H11" stroke="#AAB5DC" stroke-width="1.6"/><path d="M5.5 10 V16" stroke="#AAB5DC" stroke-width="1.8"/></svg>
<svg class="a" style="left:3707px;top:123px;" width="15" height="13" viewBox="0 0 15 13"><path d="M1 0.8 L14 12.2 M14 0.8 L1 12.2" stroke="#AAB5DC" stroke-width="1.9"/></svg>
<div class="a" style="left:2627px;top:147px;width:1106px;height:44px;background:#CCD5F0;"></div>
<svg class="a" style="left:2637px;top:157px;" width="25" height="25" viewBox="0 0 25 25"><rect x="10.5" y="1.5" width="12.5" height="15.5" fill="#C5CBE0" stroke="#1E1E1E" stroke-width="1.8"/><path d="M10.5 4.5 H23" stroke="#1E1E1E" stroke-width="1.6"/><path d="M14 8 H20.5 M14 11 H20.5 M14 14 H20.5" stroke="#1E1E1E" stroke-width="1.3"/><path d="M1.5 12 L5.8 15.8 L12.3 10 V23 L5.8 17.6 L1.5 21 Z" fill="none" stroke="#7D3FC4" stroke-width="1.7" stroke-linejoin="round"/></svg>
<div class="a" style="left:2671px;top:153px;width:2px;height:32px;background:#9AA9D2;"></div>
<svg class="a" style="left:2687px;top:156px;" width="24" height="26" viewBox="0 0 24 26"><path d="M1 1 H7 L4 5 Z" fill="#1E5BB8"/><path d="M4 4 V7" stroke="#1E5BB8" stroke-width="1.5"/><circle cx="12" cy="15" r="8" fill="#C5CBE0" stroke="#1E1E1E" stroke-width="1.8"/><path d="M12 10 V15 H16" fill="none" stroke="#1E1E1E" stroke-width="1.6"/></svg>
<svg class="a" style="left:2721px;top:165px;" width="10" height="6" viewBox="0 0 10 6"><path d="M0 0 H10 L5 5 Z" fill="#1E1E1E"/></svg>
<svg class="a" style="left:2741px;top:162px;" width="22" height="17" viewBox="0 0 22 17"><path d="M1 5 H21 M5 1 L1 5 M21 11 H1 M17 15 L21 11" fill="none" stroke="#1E1E1E" stroke-width="1.8"/></svg>
<svg class="a" style="left:2774px;top:157px;" width="24" height="24" viewBox="0 0 24 24"><path d="M15.5 2.8 A9.6 9.6 0 1 1 7.8 2.6" fill="none" stroke="#1A64C0" stroke-width="2"/><path d="M1.5 3.2 H8 V9.5" fill="none" stroke="#1A64C0" stroke-width="1.8"/></svg>
<svg class="a" style="left:2808px;top:157px;" width="23" height="24" viewBox="0 0 23 24"><path d="M5 4 V1 H22 V18 H19" fill="none" stroke="#1E1E1E" stroke-width="1.8"/><rect x="1" y="4" width="18" height="19" fill="#C5CBE0" stroke="#1E1E1E" stroke-width="1.8"/><path d="M5 13 H15" stroke="#1E1E1E" stroke-width="1.8"/></svg>
<svg class="a" style="left:2843px;top:157px;" width="23" height="24" viewBox="0 0 23 24"><rect x="10" y="2" width="10.5" height="13.5" fill="#C5CBE0" stroke="#6E6E6E" stroke-width="1.6"/><rect x="1.5" y="5" width="10.5" height="13.5" fill="#C5CBE0" stroke="#6E6E6E" stroke-width="1.6"/><rect x="5.8" y="9" width="11" height="14" fill="#C5CBE0" stroke="#1E1E1E" stroke-width="1.8"/></svg>
<div class="a" style="left:2876px;top:153px;width:2px;height:32px;background:#9AA9D2;"></div>
<svg class="a" style="left:2892px;top:163px;" width="17" height="12" viewBox="0 0 17 12"><path d="M6 1 L1 6 L6 11 M11 1 L16 6 L11 11" fill="none" stroke="#1E1E1E" stroke-width="1.6"/></svg>
<svg class="a" style="left:2924px;top:158px;" width="23" height="23" viewBox="0 0 23 23"><path d="M2.5 20.5 L11 12" stroke="#5A5A5A" stroke-width="3.6" stroke-linecap="round"/><path d="M2.5 20.5 L11 12" stroke="#C5CBE0" stroke-width="1.4" stroke-linecap="round"/><path d="M10 13 Q7 6 13 2.8 Q16.5 1 20.5 2 L16.5 6 L17.5 8 L19.5 9 L22.5 5.5 Q23.5 10.5 19.5 12.5 Q15.5 14.5 11.5 12.5" fill="#1E1E1E"/></svg>
<svg class="a" style="left:2957px;top:158px;" width="24" height="22" viewBox="0 0 24 22"><rect x="1" y="12" width="15" height="6" fill="#C5CBE0" stroke="#1E1E1E" stroke-width="1.8"/><path d="M1 18 H22" stroke="#1E1E1E" stroke-width="1.8"/><path d="M18 1 L17 5 M22 6 L19 8 M23 12 L19 11" stroke="#C89A1E" stroke-width="1.5"/></svg>
<div class="a" style="left:2627px;top:191px;width:1106px;height:34px;background:#FCFCFC;box-sizing:border-box;border:2px solid #8A94A6;"></div>
<div class="t" style="left:2635.60px;top:198.21px;font:18px 'Liberation Sans', sans-serif;line-height:20.11px;color:#6D6D6D;letter-spacing:-0.321px;">Search Solution Explorer (Ctrl+;)</div>
<svg class="a" style="left:3694px;top:199px;" width="19" height="19" viewBox="0 0 19 19"><circle cx="11.5" cy="7.5" r="5.5" fill="none" stroke="#1E1E1E" stroke-width="1.8"/><path d="M7.5 11.5 L1 18" stroke="#1E1E1E" stroke-width="2.4"/></svg>
<div class="a" style="left:3715px;top:193px;width:2px;height:30px;background:#D0D5E3;"></div>
<svg class="a" style="left:3720px;top:205px;" width="9" height="5" viewBox="0 0 9 5"><path d="M0 0 H9 L4.5 4.5 Z" fill="#1E1E1E"/></svg>
<div class="a" style="left:2627px;top:225px;width:1106px;height:1152px;background:#F7F8FD;"></div>
<div class="a" style="left:2627px;top:258px;width:1106px;height:30px;background:#E5E7EF;"></div>
<svg class="a" style="left:2649px;top:232px;" width="23" height="22" viewBox="0 0 23 22"><path d="M1 20 V1 H21 V7" fill="none" stroke="#3C3C3C" stroke-width="1.5"/><path d="M1 5 H21" stroke="#3C3C3C" stroke-width="1.5"/><path d="M17 8 L21 10 V20 L17 22 L11 17 L8 19 L6.5 18 V12 L8 11 L11 13 Z M17 12 L13.5 15 L17 18 Z M8 13.5 V16.5 L9.5 15 Z" fill="#8C4BD0" fill-rule="evenodd"/></svg>
<div class="t" style="left:2679.60px;top:235.31px;font:18px 'Liberation Sans', sans-serif;line-height:20.11px;color:#1E1E1E;letter-spacing:-0.008px;">Solution 'Printer' (2 of 2 projects)</div>
<svg class="a" style="left:2643px;top:268px;" width="11" height="11" viewBox="0 0 11 11"><path d="M10 0 V10 H0 Z" fill="#1E1E1E"/></svg>
<svg class="a" style="left:2661px;top:270px;" width="12" height="9" viewBox="0 0 12 9"><path d="M0.8 4.2 L4.2 7.4 L10.5 1" fill="none" stroke="#C8202A" stroke-width="1.6"/></svg>
<svg class="a" style="left:2676px;top:264px;" width="22" height="19" viewBox="0 0 22 19"><rect x="1.3" y="1.3" width="19.5" height="16.5" rx="1" fill="#D8DAE6" stroke="#6A6A6A" stroke-width="1.9"/><path d="M9.6 5.6 A4.6 4.6 0 1 0 9.6 13" fill="none" stroke="#3C9A3C" stroke-width="1.5"/><path d="M12.5 4.3 L12 13 M16 4.3 L15.5 13 M10 7 H18.3 M9.8 10.5 H18" stroke="#2A7F2A" stroke-width="1.9"/></svg>
<div class="t" style="left:2707.70px;top:265.31px;font:18px 'Liberation Sans', sans-serif;line-height:20.11px;color:#1E1E1E;letter-spacing:-0.505px;">Client</div>
<svg class="a" style="left:2670px;top:295px;" width="10" height="16" viewBox="0 0 10 16"><path d="M1.2 1.2 L8 7.6 L1.2 14 Z" fill="none" stroke="#1E1E1E" stroke-width="1.7"/></svg>
<svg class="a" style="left:2688px;top:297px;" width="10" height="12" viewBox="0 0 10 12"><path d="M2.5 5 V3.5 Q2.5 1 5 1 Q7.5 1 7.5 3.5 V5" fill="none" stroke="#1E6FC8" stroke-width="1.5"/><rect x="1" y="5" width="8" height="6.5" fill="#D6E4F7" stroke="#1E6FC8" stroke-width="1.5"/></svg>
<svg class="a" style="left:2703px;top:292px;" width="23" height="23" viewBox="0 0 23 23"><path d="M2.5 20.5 L11 12" stroke="#5A5A5A" stroke-width="3.8" stroke-linecap="round"/><path d="M2.5 20.5 L11 12" stroke="#D6D9E2" stroke-width="1.5" stroke-linecap="round"/><path d="M10 13 Q7 6 13 2.8 Q16.5 1 20.5 2 L16.5 6 L17.5 8 L19.5 9 L22.5 5.5 Q23.5 10.5 19.5 12.5 Q15.5 14.5 11.5 12.5" fill="#1E1E1E"/></svg>
<div class="t" style="left:2733.70px;top:295.31px;font:18px 'Liberation Sans', sans-serif;line-height:20.11px;color:#1E1E1E;letter-spacing:-0.365px;">Properties</div>
<svg class="a" style="left:2670px;top:325px;" width="10" height="16" viewBox="0 0 10 16"><path d="M1.2 1.2 L8 7.6 L1.2 14 Z" fill="none" stroke="#1E1E1E" stroke-width="1.7"/></svg>
<svg class="a" style="left:2701px;top:323px;" width="26" height="17" viewBox="0 0 26 17"><path d="M9.5 5 H16.6 M6.7 11.3 H13.5" stroke="#9A9A9A" stroke-width="1.6"/><rect x="4" y="2.9" width="5.5" height="4.5" fill="#D6E0F5" stroke="#4A4A4A" stroke-width="1.5"/><rect x="1.5" y="8.7" width="5.2" height="5.3" fill="#D6E0F5" stroke="#2B2B2B" stroke-width="1.6"/><rect x="16.6" y="1.3" width="8" height="7.7" fill="#D6E0F5" stroke="#5A5A5A" stroke-width="1.6"/><rect x="13.5" y="7.2" width="8" height="8.3" fill="#D6E0F5" stroke="#2B2B2B" stroke-width="1.8"/></svg>
<div class="t" style="left:2733.70px;top:325.31px;font:18px 'Liberation Sans', sans-serif;line-height:20.11px;color:#1E1E1E;letter-spacing:-0.916px;">References</div>
<svg class="a" style="left:2670px;top:358px;" width="11" height="11" viewBox="0 0 11 11"><path d="M10 0 V10 H0 Z" fill="#1E1E1E"/></svg>
<svg class="a" style="left:2702px;top:353px;" width="26" height="19" viewBox="0 0 26 19"><path d="M1.5 17.5 V2 H9 L11 4 H20 V8" fill="#EFE7D2" stroke="#A47A1C" stroke-width="1.6"/><path d="M1.5 17.5 L4 8 H24.5 L22 17.5 Z" fill="#C9B27C" stroke="#A47A1C" stroke-width="1.7" stroke-linejoin="round"/></svg>
<div class="t" style="left:2733.70px;top:355.31px;font:18px 'Liberation Sans', sans-serif;line-height:20.11px;color:#1E1E1E;letter-spacing:-0.298px;">generated</div>
<svg class="a" style="left:2697px;top:385px;" width="10" height="16" viewBox="0 0 10 16"><path d="M1.2 1.2 L8 7.6 L1.2 14 Z" fill="none" stroke="#1E1E1E" stroke-width="1.7"/></svg>
<svg class="a" style="left:2716px;top:388px;" width="10" height="10" viewBox="0 0 10 10"><circle cx="4.7" cy="4.6" r="4.4" fill="#D0111B"/><rect x="2.3" y="3.8" width="4.8" height="1.7" fill="#FFFFFF"/></svg>
<svg class="a" style="left:2731px;top:384px;" width="23" height="17" viewBox="0 0 23 17"><path d="M9 2.6 Q7.5 1.5 5.8 1.5 Q1.3 1.5 1.3 7.5 Q1.3 13.5 5.8 13.5 Q7.5 13.5 9 12.4" fill="none" stroke="#3C9A3C" stroke-width="2.2"/><path d="M14 2 L13 10.5 M18.5 2 L17.5 10.5 M11.2 4.6 H20.5 M10.8 8 H20" stroke="#2E8B2E" stroke-width="1.8"/></svg>
<div class="t" style="left:2760.70px;top:385.31px;font:18px 'Liberation Sans', sans-serif;line-height:20.11px;color:#1E1E1E;letter-spacing:-0.473px;">Printer.cs</div>
<svg class="a" style="left:2688px;top:417px;" width="10" height="12" viewBox="0 0 10 12"><path d="M2.5 5 V3.5 Q2.5 1 5 1 Q7.5 1 7.5 3.5 V5" fill="none" stroke="#1E6FC8" stroke-width="1.5"/><rect x="1" y="5" width="8" height="6.5" fill="#D6E4F7" stroke="#1E6FC8" stroke-width="1.5"/></svg>
<svg class="a" style="left:2702px;top:411px;" width="23" height="25" viewBox="0 0 23 25"><path d="M3.8 2.3 H15 L20.5 7.8 V21.7 H12" fill="#DCE3F4" stroke="#4A4A4A" stroke-width="1.7" stroke-linejoin="round"/><path d="M3.8 2.3 V10" fill="none" stroke="#4A4A4A" stroke-width="1.7"/><path d="M15 2.3 V7.8 H20.5 Z" fill="#4A4A4A"/><path d="M6 16 L12.3 22.5" stroke="#1E1E1E" stroke-width="3.4" stroke-linecap="round"/><circle cx="5.3" cy="14.6" r="4.6" fill="#1E1E1E"/><path d="M0.5 12.8 L4.2 14.2 L5.6 10.5 L2.5 9.5 Z" fill="#F6F7FD"/></svg>
<div class="t" style="left:2733.70px;top:415.31px;font:18px 'Liberation Sans', sans-serif;line-height:20.11px;color:#1E1E1E;letter-spacing:-0.213px;">packages.config</div>
<svg class="a" style="left:2688px;top:447px;" width="10" height="12" viewBox="0 0 10 12"><path d="M2.5 5 V3.5 Q2.5 1 5 1 Q7.5 1 7.5 3.5 V5" fill="none" stroke="#1E6FC8" stroke-width="1.5"/><rect x="1" y="5" width="8" height="6.5" fill="#D6E4F7" stroke="#1E6FC8" stroke-width="1.5"/></svg>
<svg class="a" style="left:2702px;top:441px;" width="23" height="24" viewBox="0 0 23 24"><path d="M3.8 2.5 H15 L20.5 8 V21.5 H3.8 Z" fill="#E8E8EE" stroke="#4A4A4A" stroke-width="1.7" stroke-linejoin="round"/><path d="M15 2.5 V8 H20.5 Z" fill="#4A4A4A"/><rect x="2.3" y="11.5" width="10.5" height="10.2" fill="#DCE3F4" stroke="#1E1E1E" stroke-width="1.8"/><path d="M5 19 L10 14 M6.5 14 H10 V17.5" fill="none" stroke="#1E1E1E" stroke-width="1.6"/></svg>
<div class="t" style="left:2733.70px;top:445.31px;font:18px 'Liberation Sans', sans-serif;line-height:20.11px;color:#1E1E1E;letter-spacing:-0.477px;">Printer.ice</div>
<svg class="a" style="left:2670px;top:475px;" width="10" height="16" viewBox="0 0 10 16"><path d="M1.2 1.2 L8 7.6 L1.2 14 Z" fill="none" stroke="#1E1E1E" stroke-width="1.7"/></svg>
<svg class="a" style="left:2688px;top:477px;" width="10" height="12" viewBox="0 0 10 12"><path d="M2.5 5 V3.5 Q2.5 1 5 1 Q7.5 1 7.5 3.5 V5" fill="none" stroke="#1E6FC8" stroke-width="1.5"/><rect x="1" y="5" width="8" height="6.5" fill="#D6E4F7" stroke="#1E6FC8" stroke-width="1.5"/></svg>
<svg class="a" style="left:2704px;top:474px;" width="23" height="17" viewBox="0 0 23 17"><path d="M9 2.6 Q7.5 1.5 5.8 1.5 Q1.3 1.5 1.3 7.5 Q1.3 13.5 5.8 13.5 Q7.5 13.5 9 12.4" fill="none" stroke="#3C9A3C" stroke-width="2.2"/><path d="M14 2 L13 10.5 M18.5 2 L17.5 10.5 M11.2 4.6 H20.5 M10.8 8 H20" stroke="#2E8B2E" stroke-width="1.8"/></svg>
<div class="t" style="left:2733.70px;top:475.31px;font:18px 'Liberation Sans', sans-serif;line-height:20.11px;color:#1E1E1E;letter-spacing:-0.453px;">Program.cs</div>
<svg class="a" style="left:2688px;top:507px;" width="10" height="12" viewBox="0 0 10 12"><path d="M2.5 5 V3.5 Q2.5 1 5 1 Q7.5 1 7.5 3.5 V5" fill="none" stroke="#1E6FC8" stroke-width="1.5"/><rect x="1" y="5" width="8" height="6.5" fill="#D6E4F7" stroke="#1E6FC8" stroke-width="1.5"/></svg>
<svg class="a" style="left:2702px;top:501px;" width="23" height="24" viewBox="0 0 23 24"><path d="M3.8 2.5 H15 L20.5 8 V21.5 H3.8 Z" fill="#E8E8EE" stroke="#4A4A4A" stroke-width="1.7" stroke-linejoin="round"/><path d="M15 2.5 V8 H20.5 Z" fill="#4A4A4A"/><rect x="2.3" y="11.5" width="10.5" height="10.2" fill="#DCE3F4" stroke="#1E1E1E" stroke-width="1.8"/><path d="M5 19 L10 14 M6.5 14 H10 V17.5" fill="none" stroke="#1E1E1E" stroke-width="1.6"/></svg>
<div class="t" style="left:2733.70px;top:505.31px;font:18px 'Liberation Sans', sans-serif;line-height:20.11px;color:#1E1E1E;letter-spacing:-0.813px;">README.md</div>
<svg class="a" style="left:2643px;top:538px;" width="11" height="11" viewBox="0 0 11 11"><path d="M10 0 V10 H0 Z" fill="#1E1E1E"/></svg>
<svg class="a" style="left:2661px;top:540px;" width="12" height="9" viewBox="0 0 12 9"><path d="M0.8 4.2 L4.2 7.4 L10.5 1" fill="none" stroke="#C8202A" stroke-width="1.6"/></svg>
<svg class="a" style="left:2676px;top:534px;" width="22" height="19" viewBox="0 0 22 19"><rect x="1.3" y="1.3" width="19.5" height="16.5" rx="1" fill="#D8DAE6" stroke="#6A6A6A" stroke-width="1.9"/><path d="M9.6 5.6 A4.6 4.6 0 1 0 9.6 13" fill="none" stroke="#3C9A3C" stroke-width="1.5"/><path d="M12.5 4.3 L12 13 M16 4.3 L15.5 13 M10 7 H18.3 M9.8 10.5 H18" stroke="#2A7F2A" stroke-width="1.9"/></svg>
<div class="t" style="left:2707.70px;top:535.31px;font:bold 18px 'Liberation Sans', sans-serif;line-height:20.11px;color:#1E1E1E;letter-spacing:-0.277px;">Server</div>
<svg class="a" style="left:2670px;top:565px;" width="10" height="16" viewBox="0 0 10 16"><path d="M1.2 1.2 L8 7.6 L1.2 14 Z" fill="none" stroke="#1E1E1E" stroke-width="1.7"/></svg>
<svg class="a" style="left:2703px;top:562px;" width="23" height="23" viewBox="0 0 23 23"><path d="M2.5 20.5 L11 12" stroke="#5A5A5A" stroke-width="3.8" stroke-linecap="round"/><path d="M2.5 20.5 L11 12" stroke="#D6D9E2" stroke-width="1.5" stroke-linecap="round"/><path d="M10 13 Q7 6 13 2.8 Q16.5 1 20.5 2 L16.5 6 L17.5 8 L19.5 9 L22.5 5.5 Q23.5 10.5 19.5 12.5 Q15.5 14.5 11.5 12.5" fill="#1E1E1E"/></svg>
<div class="t" style="left:2733.70px;top:565.31px;font:18px 'Liberation Sans', sans-serif;line-height:20.11px;color:#1E1E1E;letter-spacing:-0.365px;">Properties</div>
<svg class="a" style="left:2670px;top:595px;" width="10" height="16" viewBox="0 0 10 16"><path d="M1.2 1.2 L8 7.6 L1.2 14 Z" fill="none" stroke="#1E1E1E" stroke-width="1.7"/></svg>
<svg class="a" style="left:2701px;top:593px;" width="26" height="17" viewBox="0 0 26 17"><path d="M9.5 5 H16.6 M6.7 11.3 H13.5" stroke="#9A9A9A" stroke-width="1.6"/><rect x="4" y="2.9" width="5.5" height="4.5" fill="#D6E0F5" stroke="#4A4A4A" stroke-width="1.5"/><rect x="1.5" y="8.7" width="5.2" height="5.3" fill="#D6E0F5" stroke="#2B2B2B" stroke-width="1.6"/><rect x="16.6" y="1.3" width="8" height="7.7" fill="#D6E0F5" stroke="#5A5A5A" stroke-width="1.6"/><rect x="13.5" y="7.2" width="8" height="8.3" fill="#D6E0F5" stroke="#2B2B2B" stroke-width="1.8"/></svg>
<div class="t" style="left:2733.70px;top:595.31px;font:18px 'Liberation Sans', sans-serif;line-height:20.11px;color:#1E1E1E;letter-spacing:-0.916px;">References</div>
<svg class="a" style="left:2670px;top:625px;" width="10" height="16" viewBox="0 0 10 16"><path d="M1.2 1.2 L8 7.6 L1.2 14 Z" fill="none" stroke="#1E1E1E" stroke-width="1.7"/></svg>
<svg class="a" style="left:2702px;top:623px;" width="25" height="19" viewBox="0 0 25 19"><path d="M1.5 1.5 H9 L11 3.5 H23 V17.5 H1.5 Z" fill="#D2B872" stroke="#A47A1C" stroke-width="1.6"/><path d="M1.5 6 H23" stroke="#A47A1C" stroke-width="1.2"/></svg>
<div class="t" style="left:2733.70px;top:625.31px;font:18px 'Liberation Sans', sans-serif;line-height:20.11px;color:#1E1E1E;letter-spacing:-0.298px;">generated</div>
<svg class="a" style="left:2688px;top:657px;" width="10" height="12" viewBox="0 0 10 12"><path d="M2.5 5 V3.5 Q2.5 1 5 1 Q7.5 1 7.5 3.5 V5" fill="none" stroke="#1E6FC8" stroke-width="1.5"/><rect x="1" y="5" width="8" height="6.5" fill="#D6E4F7" stroke="#1E6FC8" stroke-width="1.5"/></svg>
<svg class="a" style="left:2702px;top:651px;" width="23" height="25" viewBox="0 0 23 25"><path d="M3.8 2.3 H15 L20.5 7.8 V21.7 H12" fill="#DCE3F4" stroke="#4A4A4A" stroke-width="1.7" stroke-linejoin="round"/><path d="M3.8 2.3 V10" fill="none" stroke="#4A4A4A" stroke-width="1.7"/><path d="M15 2.3 V7.8 H20.5 Z" fill="#4A4A4A"/><path d="M6 16 L12.3 22.5" stroke="#1E1E1E" stroke-width="3.4" stroke-linecap="round"/><circle cx="5.3" cy="14.6" r="4.6" fill="#1E1E1E"/><path d="M0.5 12.8 L4.2 14.2 L5.6 10.5 L2.5 9.5 Z" fill="#F6F7FD"/></svg>
<div class="t" style="left:2733.70px;top:655.31px;font:18px 'Liberation Sans', sans-serif;line-height:20.11px;color:#1E1E1E;letter-spacing:-0.213px;">packages.config</div>
<svg class="a" style="left:2688px;top:687px;" width="10" height="12" viewBox="0 0 10 12"><path d="M2.5 5 V3.5 Q2.5 1 5 1 Q7.5 1 7.5 3.5 V5" fill="none" stroke="#1E6FC8" stroke-width="1.5"/><rect x="1" y="5" width="8" height="6.5" fill="#D6E4F7" stroke="#1E6FC8" stroke-width="1.5"/></svg>
<svg class="a" style="left:2702px;top:681px;" width="23" height="24" viewBox="0 0 23 24"><path d="M3.8 2.5 H15 L20.5 8 V21.5 H3.8 Z" fill="#E8E8EE" stroke="#4A4A4A" stroke-width="1.7" stroke-linejoin="round"/><path d="M15 2.5 V8 H20.5 Z" fill="#4A4A4A"/><rect x="2.3" y="11.5" width="10.5" height="10.2" fill="#DCE3F4" stroke="#1E1E1E" stroke-width="1.8"/><path d="M5 19 L10 14 M6.5 14 H10 V17.5" fill="none" stroke="#1E1E1E" stroke-width="1.6"/></svg>
<div class="t" style="left:2733.70px;top:685.31px;font:18px 'Liberation Sans', sans-serif;line-height:20.11px;color:#1E1E1E;letter-spacing:-0.477px;">Printer.ice</div>
<svg class="a" style="left:2670px;top:715px;" width="10" height="16" viewBox="0 0 10 16"><path d="M1.2 1.2 L8 7.6 L1.2 14 Z" fill="none" stroke="#1E1E1E" stroke-width="1.7"/></svg>
<svg class="a" style="left:2688px;top:717px;" width="10" height="12" viewBox="0 0 10 12"><path d="M2.5 5 V3.5 Q2.5 1 5 1 Q7.5 1 7.5 3.5 V5" fill="none" stroke="#1E6FC8" stroke-width="1.5"/><rect x="1" y="5" width="8" height="6.5" fill="#D6E4F7" stroke="#1E6FC8" stroke-width="1.5"/></svg>
<svg class="a" style="left:2704px;top:714px;" width="23" height="17" viewBox="0 0 23 17"><path d="M9 2.6 Q7.5 1.5 5.8 1.5 Q1.3 1.5 1.3 7.5 Q1.3 13.5 5.8 13.5 Q7.5 13.5 9 12.4" fill="none" stroke="#3C9A3C" stroke-width="2.2"/><path d="M14 2 L13 10.5 M18.5 2 L17.5 10.5 M11.2 4.6 H20.5 M10.8 8 H20" stroke="#2E8B2E" stroke-width="1.8"/></svg>
<div class="t" style="left:2733.70px;top:715.31px;font:18px 'Liberation Sans', sans-serif;line-height:20.11px;color:#1E1E1E;letter-spacing:-0.453px;">Program.cs</div>
<svg class="a" style="left:2688px;top:747px;" width="10" height="12" viewBox="0 0 10 12"><path d="M2.5 5 V3.5 Q2.5 1 5 1 Q7.5 1 7.5 3.5 V5" fill="none" stroke="#1E6FC8" stroke-width="1.5"/><rect x="1" y="5" width="8" height="6.5" fill="#D6E4F7" stroke="#1E6FC8" stroke-width="1.5"/></svg>
<svg class="a" style="left:2702px;top:741px;" width="23" height="24" viewBox="0 0 23 24"><path d="M3.8 2.5 H15 L20.5 8 V21.5 H3.8 Z" fill="#E8E8EE" stroke="#4A4A4A" stroke-width="1.7" stroke-linejoin="round"/><path d="M15 2.5 V8 H20.5 Z" fill="#4A4A4A"/><rect x="2.3" y="11.5" width="10.5" height="10.2" fill="#DCE3F4" stroke="#1E1E1E" stroke-width="1.8"/><path d="M5 19 L10 14 M6.5 14 H10 V17.5" fill="none" stroke="#1E1E1E" stroke-width="1.6"/></svg>
<div class="t" style="left:2733.70px;top:745.31px;font:18px 'Liberation Sans', sans-serif;line-height:20.11px;color:#1E1E1E;letter-spacing:-0.813px;">README.md</div>
<div class="a" style="left:2627px;top:1377px;width:114px;height:29px;background:#3F558F;"></div>
<div class="t" style="left:2634.30px;top:1384.71px;font:18px 'Liberation Sans', sans-serif;line-height:20.11px;color:#E6E9F5;letter-spacing:-0.519px;">Test Explorer</div>
<div class="a" style="left:2745px;top:1377px;width:150px;height:30px;background:#F5F6FC;"></div>
<div class="t" style="left:2752.00px;top:1383.71px;font:18px 'Liberation Sans', sans-serif;line-height:20.11px;color:#1E1E1E;letter-spacing:-0.140px;">Solution Explorer</div>
<div class="a" style="left:2627px;top:1420px;width:1106px;height:34px;background:#3F558F;"></div>
<div class="t" style="left:2632.00px;top:1427.51px;font:18px 'Liberation Sans', sans-serif;line-height:20.11px;color:#FFFFFF;letter-spacing:-0.225px;">Properties</div>
<svg class="a" style="left:3654px;top:1434px;" width="12" height="6" viewBox="0 0 12 6"><path d="M0 0 H12 L6 6 Z" fill="#AAB5DC"/></svg>
<svg class="a" style="left:3683px;top:1429px;" width="11" height="16" viewBox="0 0 11 16"><path d="M2.2 0.8 H8.8 V9 H2.2 Z" fill="none" stroke="#AAB5DC" stroke-width="1.6"/><rect x="6.6" y="1" width="2.2" height="8" fill="#AAB5DC"/><path d="M0 9.8 H11" stroke="#AAB5DC" stroke-width="1.6"/><path d="M5.5 10 V16" stroke="#AAB5DC" stroke-width="1.8"/></svg>
<svg class="a" style="left:3707px;top:1430px;" width="15" height="13" viewBox="0 0 15 13"><path d="M1 0.8 L14 12.2 M14 0.8 L1 12.2" stroke="#AAB5DC" stroke-width="1.9"/></svg>
<div class="a" style="left:2627px;top:1454px;width:1106px;height:33px;background:#F0F4FC;"></div>
<svg class="a" style="left:3714.5px;top:1468px;" width="8" height="5" viewBox="0 0 8 5"><path d="M0 0 H8 L4 5 Z" fill="#1E1E1E"/></svg>
<div class="a" style="left:2627px;top:1487px;width:1106px;height:38px;background:#CCD5F0;"></div>
<svg class="a" style="left:2635px;top:1494px;" width="24" height="24" viewBox="0 0 24 24"><rect x="1.2" y="0.5" width="7.8" height="7.6" fill="#222"/><rect x="1.2" y="14.3" width="7.8" height="7.6" fill="#222"/><path d="M5.1 2 V6.6 M2.8 4.3 H7.4 M5.1 15.8 V20.4 M2.8 18.1 H7.4" stroke="#fff" stroke-width="1.6"/><path d="M11.3 1 H19 M11.3 3.9 H19 M11.3 7 H19 M11.3 10.1 H19 M11.3 13.2 H19 M11.3 17.9 H19 M11.3 21 H19" stroke="#222" stroke-width="1.6"/><path d="M20.3 3.9 H23 M20.3 7 H23 M20.3 10.1 H23 M20.3 13.2 H23 M20.3 21 H23" stroke="#222" stroke-width="1.6"/></svg>
<div class="a" style="left:2664px;top:1489px;width:34px;height:33px;background:#FDEDCA;box-sizing:border-box;border:1.8px solid #7A5A12;"></div>
<svg class="a" style="left:2669px;top:1493px;" width="25" height="25" viewBox="0 0 25 25"><rect x="1.3" y="1.7" width="10.4" height="10.5" fill="#3A3A3A"/><path d="M3.6 10.6 L6.5 3.4 L9.4 10.6 M4.7 8 H8.3" fill="none" stroke="#E8E8E8" stroke-width="1.5"/><path d="M2.8 16 H10 L3 22.3 H10.3" fill="none" stroke="#3A3A3A" stroke-width="2"/><path d="M18 5.7 V19" stroke="#1C3FA8" stroke-width="2.8"/><path d="M13.2 14.2 L18 20.5 L22.8 14.2" fill="none" stroke="#1C3FA8" stroke-width="2.4"/></svg>
<div class="a" style="left:2701px;top:1491px;width:1px;height:30px;background:#9AA9D2;"></div>
<svg class="a" style="left:2709px;top:1493px;" width="24" height="24" viewBox="0 0 24 24"><path d="M3 21 L12.5 11.5" stroke="#9A9EA8" stroke-width="4.2" stroke-linecap="round"/><circle cx="16.5" cy="7.5" r="6.8" fill="#9A9EA8"/><path d="M17 1.5 L23.5 8 L19.5 10 L15 5.5 Z" fill="#CCD5F0"/></svg>
<div class="a" style="left:2627px;top:1525px;width:1106px;height:587px;background:#F7F8FD;"></div>
<div class="a" style="left:2627px;top:2019px;width:1106px;height:1px;background:#E3E5EE;"></div>
<div class="a" style="left:0px;top:2123px;width:3744px;height:37px;background:#3F508B;"></div>
<svg class="a" style="left:5px;top:2129px;" width="27" height="26" viewBox="0 0 27 26"><path d="M2 2 H25 V18 H16 L13 23 L10 18 H2 Z" fill="#4D5E9A" stroke="#FFFFFF" stroke-width="2" stroke-linejoin="round"/></svg>
<div class="t" style="left:41.80px;top:2133.21px;font:18px 'Liberation Sans', sans-serif;line-height:20.11px;color:#FFFFFF;letter-spacing:-0.330px;">Rebuild All succeeded</div>
<svg class="a" style="left:3200px;top:2133px;" width="20" height="21" viewBox="0 0 20 21"><path d="M5 20 V2 M1 6 L5 1.5 L9 6 M15 1 V19 M11 15 L15 19.5 L19 15" fill="none" stroke="#FFFFFF" stroke-width="1.8"/></svg>
<div class="t" style="left:3231.00px;top:2133.21px;font:18px 'Liberation Sans', sans-serif;line-height:20.11px;color:#FFFFFF;letter-spacing:0.394px;">0 / 0</div>
<svg class="a" style="left:3277px;top:2140px;" width="12" height="7" viewBox="0 0 12 7"><path d="M0 6 L6 0 L12 6 Z" fill="#FFFFFF"/></svg>
<svg class="a" style="left:3324px;top:2132px;" width="19" height="20" viewBox="0 0 19 20"><path d="M2 18 L3 13 L14 2 Q16 0.5 17.5 2 Q19 3.5 17.5 5 L6.5 16 Z" fill="none" stroke="#FFFFFF" stroke-width="1.7" stroke-linejoin="round"/></svg>
<div class="t" style="left:3355.00px;top:2133.21px;font:18px 'Liberation Sans', sans-serif;line-height:20.11px;color:#FFFFFF;letter-spacing:-0.016px;">78</div>
<svg class="a" style="left:3411px;top:2131px;" width="23" height="25" viewBox="0 0 23 25"><circle cx="5" cy="4" r="3" fill="none" stroke="#fff" stroke-width="1.6"/><circle cx="16" cy="6" r="3" fill="none" stroke="#fff" stroke-width="1.6"/><path d="M5 7 V18 M16 9 Q16 13 5 14" fill="none" stroke="#fff" stroke-width="1.6"/><circle cx="5" cy="20" r="3" fill="none" stroke="#fff" stroke-width="1.6"/><circle cx="15.5" cy="19" r="5.5" fill="#fff"/><path d="M15.5 22 V17 M13 19 L15.5 16.5 L18 19" fill="none" stroke="#40508D" stroke-width="1.5"/></svg>
<div class="t" style="left:3441.00px;top:2133.21px;font:18px 'Liberation Sans', sans-serif;line-height:20.11px;color:#FFFFFF;letter-spacing:-0.344px;">3.7</div>
<svg class="a" style="left:3474px;top:2140px;" width="12" height="7" viewBox="0 0 12 7"><path d="M0 6 L6 0 L12 6 Z" fill="#FFFFFF"/></svg>
<svg class="a" style="left:3529px;top:2131px;" width="24" height="25" viewBox="0 0 24 25"><path d="M1 3 H20 M1 6 H20 V12 M3 6 V20 H12" fill="none" stroke="#fff" stroke-width="1.6"/><path d="M6 9 V16 M9 9 V13" stroke="#fff" stroke-width="1.4"/><circle cx="16.5" cy="18.5" r="5.5" fill="#fff"/><path d="M16.5 21.5 V16 M14 18.5 L16.5 16 L19 18.5" fill="none" stroke="#40508D" stroke-width="1.5"/></svg>
<div class="t" style="left:3561.00px;top:2133.21px;font:18px 'Liberation Sans', sans-serif;line-height:20.11px;color:#FFFFFF;letter-spacing:-0.003px;">ice-demos</div>
<svg class="a" style="left:3652px;top:2140px;" width="13" height="7" viewBox="0 0 13 7"><path d="M0 6 L6.5 0 L13 6 Z" fill="#FFFFFF"/></svg>
<svg class="a" style="left:3697px;top:2131px;" width="20" height="22" viewBox="0 0 20 22"><path d="M3 17 V10 Q3 3 10 3 Q17 3 17 10 V17 H19 M1 17 H10 M8 20 H12" fill="none" stroke="#fff" stroke-width="1.6"/></svg>
<div class="a" style="left:3710px;top:2142.3px;width:16px;height:16px;border-radius:50%;background:#D8101C"></div>
<div class="t" style="left:3713.80px;top:2142.53px;font:14px 'Liberation Sans', sans-serif;line-height:15.64px;color:#FFFFFF;letter-spacing:0px;">2</div>
</body></html>
